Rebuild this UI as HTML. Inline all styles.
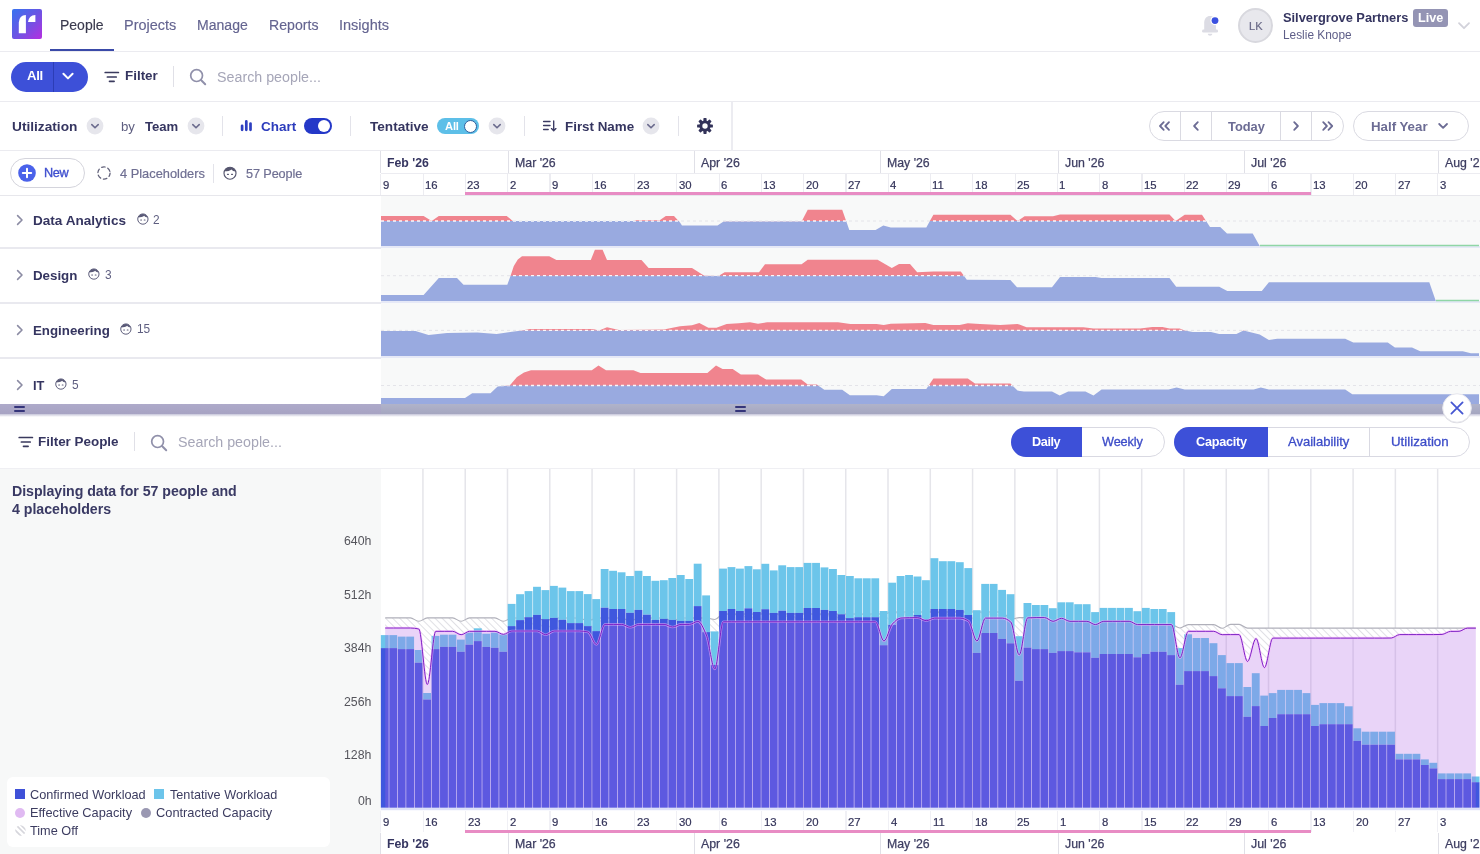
<!DOCTYPE html>
<html><head><meta charset="utf-8"><title>People</title>
<style>
html,body{margin:0;padding:0;background:#fff}
body{width:1480px;height:854px;position:relative;overflow:hidden;font-family:"Liberation Sans",sans-serif}
.t{position:absolute;white-space:nowrap;line-height:20px;height:20px;will-change:transform}
#root{position:absolute;left:0;top:0;width:1480px;height:854px;overflow:hidden;background:#fff}
</style></head><body><div id="root">
<div style="position:absolute;left:0px;top:51px;width:1480px;height:1px;background:#ebebf0"></div>
<div style="position:absolute;left:50px;top:49px;width:64px;height:2px;background:#3a4aa8"></div>
<svg style="position:absolute;left:12px;top:9px" width="30" height="30" viewBox="0 0 30 30">
<defs><linearGradient id="lg" x1="0" y1="0" x2="1" y2="1"><stop offset="0" stop-color="#3773f0"/><stop offset="0.5" stop-color="#6a55e4"/><stop offset="1" stop-color="#b52fe0"/></linearGradient></defs>
<rect width="30" height="30" rx="2" fill="url(#lg)"/>
<path d="M6.8 24.2V13.4Q7.2 6.2 13.9 5.9V24.2Z" fill="#fff"/><path d="M16 13.1Q16.6 6.3 23.4 5.9V13.1Z" fill="#fff"/></svg>
<div class="t" style="left:60.4px;top:15.3px;font-size:14.00px;letter-spacing:0.000px;font-weight:400;color:#3a3a4e;-webkit-text-stroke:0.15px #3a3a4e;">People</div>
<div class="t" style="left:124.3px;top:15.3px;font-size:14.45px;letter-spacing:0.000px;font-weight:400;color:#646490;-webkit-text-stroke:0.15px #646490;">Projects</div>
<div class="t" style="left:197.3px;top:15.3px;font-size:14.06px;letter-spacing:0.000px;font-weight:400;color:#646490;-webkit-text-stroke:0.15px #646490;">Manage</div>
<div class="t" style="left:268.9px;top:15.3px;font-size:14.14px;letter-spacing:0.000px;font-weight:400;color:#646490;-webkit-text-stroke:0.15px #646490;">Reports</div>
<div class="t" style="left:339.2px;top:15.3px;font-size:14.51px;letter-spacing:0.000px;font-weight:400;color:#646490;-webkit-text-stroke:0.15px #646490;">Insights</div>
<svg style="position:absolute;left:1200px;top:14px" width="22" height="24" viewBox="0 0 22 24">
<path d="M4.2 16V8.6C4.2 4.7 6.7 2 10.05 2S15.9 4.7 15.9 8.6V16Z" fill="#dcdce4"/><rect x="2.1" y="15.6" width="15.9" height="3" rx="1.3" fill="#dcdce4"/>
<path d="M7.8 19.7h4.5c0 1.2-1 2-2.25 2s-2.25-.8-2.25-2z" fill="#dcdce4"/>
<circle cx="15" cy="6.6" r="4.6" fill="#fff"/><circle cx="15" cy="6.6" r="3.4" fill="#3a50e0"/></svg>
<div style="position:absolute;left:1238px;top:8px;width:31px;height:31px;border-radius:50%;background:#e8e8ed;border:2px solid #d8d8de"></div>
<div class="t" style="left:1248.7px;top:15.6px;font-size:11.04px;letter-spacing:0.000px;font-weight:400;color:#6a6a88;-webkit-text-stroke:0.2px #6a6a88;">LK</div>
<div class="t" style="left:1283.2px;top:7.6px;font-size:12.82px;letter-spacing:0.000px;font-weight:700;color:#353560;">Silvergrove Partners</div>
<div style="position:absolute;left:1413px;top:9px;width:35px;height:18px;border-radius:3px;background:#9494b4"></div>
<div class="t" style="left:1418.0px;top:8.2px;font-size:12.64px;letter-spacing:0.000px;font-weight:700;color:#fff;">Live</div>
<div class="t" style="left:1283.2px;top:24.8px;font-size:11.86px;letter-spacing:0.000px;font-weight:400;color:#5e5e88;">Leslie Knope</div>
<svg style="position:absolute;left:1457px;top:21px" width="14" height="10" viewBox="0 0 14 10"><path d="M2 2.2l5 5 5-5" fill="none" stroke="#d2d2da" stroke-width="1.8" stroke-linecap="round" stroke-linejoin="round"/></svg>
<div style="position:absolute;left:0px;top:101px;width:1480px;height:1px;background:#ebebf0"></div>
<div style="position:absolute;left:10.5px;top:61.5px;width:77.5px;height:30px;border-radius:15px;background:#3d50d8"></div>
<div style="position:absolute;left:53px;top:61.5px;width:1px;height:30px;background:#2c3db6"></div>
<div class="t" style="left:26.8px;top:66.3px;font-size:13.20px;letter-spacing:-0.389px;font-weight:700;color:#fff;">All</div>
<svg style="position:absolute;left:61px;top:70px" width="14" height="12" viewBox="0 0 14 12"><path d="M2.4 3.8l4.6 4.6 4.6-4.6" fill="none" stroke="#fff" stroke-width="2" stroke-linecap="round" stroke-linejoin="round"/></svg>
<svg style="position:absolute;left:104px;top:70.5px" width="16" height="12" viewBox="0 0 16 12"><path d="M1.2 1.5h13.2M3.4 6h8.8M5.5 10.3h4.6" fill="none" stroke="#3a3a5e" stroke-width="1.7" stroke-linecap="round"/></svg>
<div class="t" style="left:124.5px;top:66.3px;font-size:13.42px;letter-spacing:0.000px;font-weight:700;color:#353560;">Filter</div>
<div style="position:absolute;left:172.6px;top:66px;width:1px;height:21px;background:#e0e0e7"></div>
<svg style="position:absolute;left:188.6px;top:68px" width="18" height="18" viewBox="0 0 18 18"><circle cx="7.6" cy="7.6" r="5.9" fill="none" stroke="#9090aa" stroke-width="1.7"/><path d="M12 12l4.2 4.2" stroke="#9090aa" stroke-width="2" stroke-linecap="round"/></svg>
<div class="t" style="left:217.0px;top:66.8px;font-size:14.28px;letter-spacing:0.000px;font-weight:400;color:#a6a6b8;">Search people...</div>
<div style="position:absolute;left:0px;top:150px;width:1480px;height:1px;background:#ebebf0"></div>
<div style="position:absolute;left:731px;top:102px;width:1.5px;height:49px;background:#ececf1"></div>
<div class="t" style="left:12.4px;top:117.0px;font-size:13.69px;letter-spacing:0.000px;font-weight:700;color:#353560;">Utilization</div>
<svg style="position:absolute;left:85.5px;top:117px" width="18" height="18" viewBox="0 0 18 18"><circle cx="9" cy="9" r="8.4" fill="#e6e6ec"/><path d="M5.8 7.6L9 10.8l3.2-3.2" fill="none" stroke="#6c6c8e" stroke-width="1.6" stroke-linecap="round" stroke-linejoin="round"/></svg>
<div class="t" style="left:121.4px;top:117.2px;font-size:13.20px;letter-spacing:-0.121px;font-weight:400;color:#5e5e80;">by</div>
<div class="t" style="left:145.1px;top:117.0px;font-size:13.12px;letter-spacing:0.000px;font-weight:700;color:#353560;">Team</div>
<svg style="position:absolute;left:186.5px;top:117px" width="18" height="18" viewBox="0 0 18 18"><circle cx="9" cy="9" r="8.4" fill="#e6e6ec"/><path d="M5.8 7.6L9 10.8l3.2-3.2" fill="none" stroke="#6c6c8e" stroke-width="1.6" stroke-linecap="round" stroke-linejoin="round"/></svg>
<div style="position:absolute;left:222.3px;top:116px;width:1px;height:20px;background:#e3e3ea"></div>
<svg style="position:absolute;left:240px;top:119px" width="13" height="13" viewBox="0 0 13 13"><path d="M2.1 6.8v4M6.3 2.4v8.4M10.5 4.5v6.3" stroke="#2d3fc0" stroke-width="2.7" stroke-linecap="round"/></svg>
<div class="t" style="left:260.5px;top:117.0px;font-size:13.48px;letter-spacing:0.000px;font-weight:700;color:#2c3cbc;">Chart</div>
<div style="position:absolute;left:304px;top:118px;width:28px;height:16px;border-radius:8px;background:#2438c8"></div>
<div style="position:absolute;left:317.7px;top:119.7px;width:12.6px;height:12.6px;border-radius:50%;background:#fff"></div>
<div style="position:absolute;left:350.3px;top:116px;width:1px;height:20px;background:#e3e3ea"></div>
<div class="t" style="left:370.0px;top:117.0px;font-size:13.58px;letter-spacing:0.000px;font-weight:700;color:#353560;">Tentative</div>
<div style="position:absolute;left:437px;top:118px;width:41.5px;height:16px;border-radius:8px;background:#5dbfe8"></div>
<div class="t" style="left:445.2px;top:115.8px;font-size:11.20px;letter-spacing:-0.171px;font-weight:700;color:#fff;">All</div>
<div style="position:absolute;left:464.2px;top:119.8px;width:11px;height:11px;border-radius:50%;background:#fff;border:1.2px solid #2f5f9e"></div>
<svg style="position:absolute;left:488px;top:117px" width="18" height="18" viewBox="0 0 18 18"><circle cx="9" cy="9" r="8.4" fill="#e6e6ec"/><path d="M5.8 7.6L9 10.8l3.2-3.2" fill="none" stroke="#6c6c8e" stroke-width="1.6" stroke-linecap="round" stroke-linejoin="round"/></svg>
<div style="position:absolute;left:523.6px;top:116px;width:1px;height:20px;background:#e3e3ea"></div>
<svg style="position:absolute;left:541px;top:118px" width="17" height="16" viewBox="0 0 17 16"><path d="M2.6 3.5h6.4M2.6 7.5h6.4M2.6 11.5h4.6" stroke="#3a3a62" stroke-width="1.4" stroke-linecap="round"/><path d="M12.7 3v9.6M10.5 10.6l2.2 2.2 2.2-2.2" fill="none" stroke="#3a3a62" stroke-width="1.35" stroke-linecap="round" stroke-linejoin="round"/></svg>
<div class="t" style="left:564.8px;top:117.0px;font-size:13.39px;letter-spacing:0.000px;font-weight:700;color:#353560;">First Name</div>
<svg style="position:absolute;left:642px;top:117px" width="18" height="18" viewBox="0 0 18 18"><circle cx="9" cy="9" r="8.4" fill="#e6e6ec"/><path d="M5.8 7.6L9 10.8l3.2-3.2" fill="none" stroke="#6c6c8e" stroke-width="1.6" stroke-linecap="round" stroke-linejoin="round"/></svg>
<div style="position:absolute;left:677.9px;top:116px;width:1px;height:20px;background:#e3e3ea"></div>
<svg style="position:absolute;left:695.5px;top:117px" width="18" height="18" viewBox="-9 -9 18 18"><g fill="#33335a"><rect x="-1.6" y="-7.9" width="3.2" height="4" rx="0.7" transform="rotate(0)"/><rect x="-1.6" y="-7.9" width="3.2" height="4" rx="0.7" transform="rotate(45)"/><rect x="-1.6" y="-7.9" width="3.2" height="4" rx="0.7" transform="rotate(90)"/><rect x="-1.6" y="-7.9" width="3.2" height="4" rx="0.7" transform="rotate(135)"/><rect x="-1.6" y="-7.9" width="3.2" height="4" rx="0.7" transform="rotate(180)"/><rect x="-1.6" y="-7.9" width="3.2" height="4" rx="0.7" transform="rotate(225)"/><rect x="-1.6" y="-7.9" width="3.2" height="4" rx="0.7" transform="rotate(270)"/><rect x="-1.6" y="-7.9" width="3.2" height="4" rx="0.7" transform="rotate(315)"/><circle r="5.6"/></g><circle r="2.7" fill="#fff"/></svg>
<div style="position:absolute;left:1149px;top:111px;width:192.5px;height:28px;border-radius:15px;border:1px solid #dadae2;background:#fff"></div>
<div style="position:absolute;left:1179.9px;top:112px;width:1px;height:28px;background:#dadae2"></div>
<div style="position:absolute;left:1211.0px;top:112px;width:1px;height:28px;background:#dadae2"></div>
<div style="position:absolute;left:1279.9px;top:112px;width:1px;height:28px;background:#dadae2"></div>
<div style="position:absolute;left:1310.9px;top:112px;width:1px;height:28px;background:#dadae2"></div>
<svg style="position:absolute;left:1155px;top:119px" width="20" height="14" viewBox="0 0 20 14"><path d="M8.7 3.2L5 7l3.7 3.8M14 3.2L10.3 7l3.7 3.8" fill="none" stroke="#6c6c94" stroke-width="1.8" stroke-linecap="round" stroke-linejoin="round"/></svg>
<svg style="position:absolute;left:1186px;top:119px" width="20" height="14" viewBox="0 0 20 14"><path d="M11.8 3.2L8.1 7l3.7 3.8" fill="none" stroke="#6c6c94" stroke-width="1.8" stroke-linecap="round" stroke-linejoin="round"/></svg>
<div class="t" style="left:1227.6px;top:117.0px;font-size:12.85px;letter-spacing:0.000px;font-weight:700;color:#6c6c94;">Today</div>
<svg style="position:absolute;left:1286px;top:119px" width="20" height="14" viewBox="0 0 20 14"><path d="M8.2 3.2l3.7 3.8-3.7 3.8" fill="none" stroke="#6c6c94" stroke-width="1.8" stroke-linecap="round" stroke-linejoin="round"/></svg>
<svg style="position:absolute;left:1317px;top:119px" width="20" height="14" viewBox="0 0 20 14"><path d="M6.2 3.2L9.9 7l-3.7 3.8M11.5 3.2l3.7 3.8-3.7 3.8" fill="none" stroke="#6c6c94" stroke-width="1.8" stroke-linecap="round" stroke-linejoin="round"/></svg>
<div style="position:absolute;left:1353px;top:111px;width:113.5px;height:28px;border-radius:15px;border:1px solid #dadae2;background:#fff"></div>
<div class="t" style="left:1371.4px;top:117.0px;font-size:13.28px;letter-spacing:0.000px;font-weight:700;color:#6c6c94;">Half Year</div>
<svg style="position:absolute;left:1432.5px;top:119px" width="20" height="14" viewBox="0 0 20 14"><path d="M6.2 5l3.9 3.9L14 5" fill="none" stroke="#6c6c94" stroke-width="1.8" stroke-linecap="round" stroke-linejoin="round"/></svg>
<div style="position:absolute;left:0px;top:195px;width:1480px;height:1px;background:#e7e7ec"></div>
<div style="position:absolute;left:10px;top:158px;width:72.5px;height:28px;border-radius:15px;border:1px solid #d4d4dc;background:#fff"></div>
<svg style="position:absolute;left:18px;top:164px" width="18" height="18" viewBox="0 0 18 18"><circle cx="9" cy="9" r="8.8" fill="#4a62ea"/><path d="M9 4.8v8.4M4.8 9h8.4" stroke="#fff" stroke-width="2" stroke-linecap="round"/></svg>
<div class="t" style="left:43.6px;top:163.0px;font-size:12.70px;letter-spacing:-0.335px;font-weight:400;color:#3f4fcf;-webkit-text-stroke:0.35px #3f4fcf;">New</div>
<svg style="position:absolute;left:96px;top:165px" width="16" height="16" viewBox="0 0 16 16"><circle cx="8" cy="8" r="6.1" fill="none" stroke="#5f5f78" stroke-width="1.25" stroke-dasharray="3.6 2.8" stroke-linecap="round"/></svg>
<div class="t" style="left:120.0px;top:164.0px;font-size:12.83px;letter-spacing:0.000px;font-weight:400;color:#6f6f92;-webkit-text-stroke:0.2px #6f6f92;">4 Placeholders</div>
<div style="position:absolute;left:213.4px;top:163.5px;width:1px;height:19px;background:#e3e3ea"></div>
<svg style="position:absolute;left:221.8px;top:164.8px" width="16.0" height="16.0" viewBox="0 0 16 16"><circle cx="8" cy="8.2" r="6" fill="none" stroke="#55556e" stroke-width="1.15"/><path d="M2.6 6.3C3.4 3.7 5.4 2.2 8 2.2c2.7 0 4.8 1.6 5.5 4.3C11.8 6.3 10.4 5.6 9.5 4.4 8.2 5.6 5.4 6.3 2.6 6.3z" fill="#55556e"/><path d="M5.5 9.3h0.9M9.6 9.3h0.9" stroke="#55556e" stroke-width="1.3" stroke-linecap="round"/></svg>
<div class="t" style="left:246.1px;top:164.0px;font-size:12.70px;letter-spacing:-0.111px;font-weight:400;color:#6f6f92;-webkit-text-stroke:0.2px #6f6f92;">57 People</div>
<div style="position:absolute;left:381px;top:151px;width:1099px;height:44px;background:#fff"></div>
<div style="position:absolute;left:381px;top:172.6px;width:1099px;height:1px;background:#ececf1"></div>
<div style="position:absolute;left:380px;top:151px;width:1px;height:22px;background:#e0e0e7"></div>
<div class="t" style="left:387.3px;top:152.5px;font-size:12.31px;letter-spacing:0.000px;font-weight:700;color:#353560;">Feb '26</div>
<div style="position:absolute;left:508px;top:151px;width:1px;height:22px;background:#e0e0e7"></div>
<div class="t" style="left:515.2px;top:152.5px;font-size:12.33px;letter-spacing:0.000px;font-weight:400;color:#3e3e62;-webkit-text-stroke:0.25px #3e3e62;">Mar '26</div>
<div style="position:absolute;left:694px;top:151px;width:1px;height:22px;background:#e0e0e7"></div>
<div class="t" style="left:701.4px;top:152.5px;font-size:12.36px;letter-spacing:0.000px;font-weight:400;color:#3e3e62;-webkit-text-stroke:0.25px #3e3e62;">Apr '26</div>
<div style="position:absolute;left:880px;top:151px;width:1px;height:22px;background:#e0e0e7"></div>
<div class="t" style="left:887.3px;top:152.5px;font-size:12.30px;letter-spacing:0.000px;font-weight:400;color:#3e3e62;-webkit-text-stroke:0.25px #3e3e62;">May '26</div>
<div style="position:absolute;left:1058px;top:151px;width:1px;height:22px;background:#e0e0e7"></div>
<div class="t" style="left:1064.8px;top:152.5px;font-size:12.35px;letter-spacing:0.000px;font-weight:400;color:#3e3e62;-webkit-text-stroke:0.25px #3e3e62;">Jun '26</div>
<div style="position:absolute;left:1244px;top:151px;width:1px;height:22px;background:#e0e0e7"></div>
<div class="t" style="left:1250.8px;top:152.5px;font-size:12.41px;letter-spacing:0.000px;font-weight:400;color:#3e3e62;-webkit-text-stroke:0.25px #3e3e62;">Jul '26</div>
<div style="position:absolute;left:1438px;top:151px;width:1px;height:22px;background:#e0e0e7"></div>
<div class="t" style="left:1445.3px;top:152.5px;font-size:12.32px;letter-spacing:0.000px;font-weight:400;color:#3e3e62;-webkit-text-stroke:0.25px #3e3e62;">Aug '26</div>
<div style="position:absolute;left:380.3px;top:173.5px;width:1.2px;height:21px;background:#ececf1"></div>
<div class="t" style="left:382.8px;top:175.1px;font-size:11.35px;letter-spacing:0.000px;font-weight:400;color:#34345a;-webkit-text-stroke:0.2px #34345a;">9</div>
<div style="position:absolute;left:422.58px;top:173.5px;width:1.2px;height:21px;background:#ececf1"></div>
<div class="t" style="left:425.1px;top:175.1px;font-size:11.35px;letter-spacing:-0.000px;font-weight:400;color:#34345a;-webkit-text-stroke:0.2px #34345a;">16</div>
<div style="position:absolute;left:464.86px;top:173.5px;width:1.2px;height:21px;background:#ececf1"></div>
<div class="t" style="left:467.4px;top:175.1px;font-size:11.35px;letter-spacing:-0.000px;font-weight:400;color:#34345a;-webkit-text-stroke:0.2px #34345a;">23</div>
<div style="position:absolute;left:507.14000000000004px;top:173.5px;width:1.2px;height:21px;background:#ececf1"></div>
<div class="t" style="left:509.6px;top:175.1px;font-size:11.35px;letter-spacing:0.000px;font-weight:400;color:#34345a;-webkit-text-stroke:0.2px #34345a;">2</div>
<div style="position:absolute;left:549.42px;top:173.5px;width:1.2px;height:21px;background:#ececf1"></div>
<div class="t" style="left:551.9px;top:175.1px;font-size:11.35px;letter-spacing:0.000px;font-weight:400;color:#34345a;-webkit-text-stroke:0.2px #34345a;">9</div>
<div style="position:absolute;left:591.6999999999999px;top:173.5px;width:1.2px;height:21px;background:#ececf1"></div>
<div class="t" style="left:594.2px;top:175.1px;font-size:11.35px;letter-spacing:0.000px;font-weight:400;color:#34345a;-webkit-text-stroke:0.2px #34345a;">16</div>
<div style="position:absolute;left:633.98px;top:173.5px;width:1.2px;height:21px;background:#ececf1"></div>
<div class="t" style="left:636.5px;top:175.1px;font-size:11.35px;letter-spacing:0.000px;font-weight:400;color:#34345a;-webkit-text-stroke:0.2px #34345a;">23</div>
<div style="position:absolute;left:676.26px;top:173.5px;width:1.2px;height:21px;background:#ececf1"></div>
<div class="t" style="left:678.8px;top:175.1px;font-size:11.35px;letter-spacing:0.000px;font-weight:400;color:#34345a;-webkit-text-stroke:0.2px #34345a;">30</div>
<div style="position:absolute;left:718.54px;top:173.5px;width:1.2px;height:21px;background:#ececf1"></div>
<div class="t" style="left:721.0px;top:175.1px;font-size:11.35px;letter-spacing:0.000px;font-weight:400;color:#34345a;-webkit-text-stroke:0.2px #34345a;">6</div>
<div style="position:absolute;left:760.8199999999999px;top:173.5px;width:1.2px;height:21px;background:#ececf1"></div>
<div class="t" style="left:763.3px;top:175.1px;font-size:11.35px;letter-spacing:0.000px;font-weight:400;color:#34345a;-webkit-text-stroke:0.2px #34345a;">13</div>
<div style="position:absolute;left:803.0999999999999px;top:173.5px;width:1.2px;height:21px;background:#ececf1"></div>
<div class="t" style="left:805.6px;top:175.1px;font-size:11.35px;letter-spacing:0.000px;font-weight:400;color:#34345a;-webkit-text-stroke:0.2px #34345a;">20</div>
<div style="position:absolute;left:845.38px;top:173.5px;width:1.2px;height:21px;background:#ececf1"></div>
<div class="t" style="left:847.9px;top:175.1px;font-size:11.35px;letter-spacing:0.000px;font-weight:400;color:#34345a;-webkit-text-stroke:0.2px #34345a;">27</div>
<div style="position:absolute;left:887.66px;top:173.5px;width:1.2px;height:21px;background:#ececf1"></div>
<div class="t" style="left:890.2px;top:175.1px;font-size:11.35px;letter-spacing:0.000px;font-weight:400;color:#34345a;-webkit-text-stroke:0.2px #34345a;">4</div>
<div style="position:absolute;left:929.9399999999999px;top:173.5px;width:1.2px;height:21px;background:#ececf1"></div>
<div class="t" style="left:932.4px;top:175.1px;font-size:11.35px;letter-spacing:0.000px;font-weight:400;color:#34345a;-webkit-text-stroke:0.2px #34345a;">11</div>
<div style="position:absolute;left:972.22px;top:173.5px;width:1.2px;height:21px;background:#ececf1"></div>
<div class="t" style="left:974.7px;top:175.1px;font-size:11.35px;letter-spacing:0.000px;font-weight:400;color:#34345a;-webkit-text-stroke:0.2px #34345a;">18</div>
<div style="position:absolute;left:1014.5px;top:173.5px;width:1.2px;height:21px;background:#ececf1"></div>
<div class="t" style="left:1017.0px;top:175.1px;font-size:11.35px;letter-spacing:0.000px;font-weight:400;color:#34345a;-webkit-text-stroke:0.2px #34345a;">25</div>
<div style="position:absolute;left:1056.78px;top:173.5px;width:1.2px;height:21px;background:#ececf1"></div>
<div class="t" style="left:1059.3px;top:175.1px;font-size:11.35px;letter-spacing:0.000px;font-weight:400;color:#34345a;-webkit-text-stroke:0.2px #34345a;">1</div>
<div style="position:absolute;left:1099.06px;top:173.5px;width:1.2px;height:21px;background:#ececf1"></div>
<div class="t" style="left:1101.6px;top:175.1px;font-size:11.35px;letter-spacing:0.000px;font-weight:400;color:#34345a;-webkit-text-stroke:0.2px #34345a;">8</div>
<div style="position:absolute;left:1141.34px;top:173.5px;width:1.2px;height:21px;background:#ececf1"></div>
<div class="t" style="left:1143.8px;top:175.1px;font-size:11.35px;letter-spacing:0.000px;font-weight:400;color:#34345a;-webkit-text-stroke:0.2px #34345a;">15</div>
<div style="position:absolute;left:1183.6200000000001px;top:173.5px;width:1.2px;height:21px;background:#ececf1"></div>
<div class="t" style="left:1186.1px;top:175.1px;font-size:11.35px;letter-spacing:0.000px;font-weight:400;color:#34345a;-webkit-text-stroke:0.2px #34345a;">22</div>
<div style="position:absolute;left:1225.8999999999999px;top:173.5px;width:1.2px;height:21px;background:#ececf1"></div>
<div class="t" style="left:1228.4px;top:175.1px;font-size:11.35px;letter-spacing:0.000px;font-weight:400;color:#34345a;-webkit-text-stroke:0.2px #34345a;">29</div>
<div style="position:absolute;left:1268.18px;top:173.5px;width:1.2px;height:21px;background:#ececf1"></div>
<div class="t" style="left:1270.7px;top:175.1px;font-size:11.35px;letter-spacing:0.000px;font-weight:400;color:#34345a;-webkit-text-stroke:0.2px #34345a;">6</div>
<div style="position:absolute;left:1310.46px;top:173.5px;width:1.2px;height:21px;background:#ececf1"></div>
<div class="t" style="left:1313.0px;top:175.1px;font-size:11.35px;letter-spacing:0.000px;font-weight:400;color:#34345a;-webkit-text-stroke:0.2px #34345a;">13</div>
<div style="position:absolute;left:1352.74px;top:173.5px;width:1.2px;height:21px;background:#ececf1"></div>
<div class="t" style="left:1355.2px;top:175.1px;font-size:11.35px;letter-spacing:0.000px;font-weight:400;color:#34345a;-webkit-text-stroke:0.2px #34345a;">20</div>
<div style="position:absolute;left:1395.02px;top:173.5px;width:1.2px;height:21px;background:#ececf1"></div>
<div class="t" style="left:1397.5px;top:175.1px;font-size:11.35px;letter-spacing:0.000px;font-weight:400;color:#34345a;-webkit-text-stroke:0.2px #34345a;">27</div>
<div style="position:absolute;left:1437.3px;top:173.5px;width:1.2px;height:21px;background:#ececf1"></div>
<div class="t" style="left:1439.8px;top:175.1px;font-size:11.35px;letter-spacing:0.000px;font-weight:400;color:#34345a;-webkit-text-stroke:0.2px #34345a;">3</div>
<div style="position:absolute;left:465.16px;top:192px;width:845.8000000000002px;height:3px;background:#e88cc4"></div>
<div style="position:absolute;left:381px;top:196px;width:1099px;height:208px;background:#f8f9f9"></div>
<svg style="position:absolute;left:14px;top:213.4px" width="12" height="14" viewBox="0 0 12 14"><path d="M3.6 2.6L8 7l-4.4 4.4" fill="none" stroke="#8c8ca4" stroke-width="1.6" stroke-linecap="round" stroke-linejoin="round"/></svg>
<div class="t" style="left:33.2px;top:210.9px;font-size:13.57px;letter-spacing:0.000px;font-weight:700;color:#353560;">Data Analytics</div>
<svg style="position:absolute;left:135.62px;top:212.448px" width="13.76" height="13.76" viewBox="0 0 16 16"><circle cx="8" cy="8.2" r="6" fill="none" stroke="#5a5a78" stroke-width="1.15"/><path d="M2.6 6.3C3.4 3.7 5.4 2.2 8 2.2c2.7 0 4.8 1.6 5.5 4.3C11.8 6.3 10.4 5.6 9.5 4.4 8.2 5.6 5.4 6.3 2.6 6.3z" fill="#5a5a78"/><path d="M5.5 9.3h0.9M9.6 9.3h0.9" stroke="#5a5a78" stroke-width="1.3" stroke-linecap="round"/></svg>
<div class="t" style="left:153.2px;top:209.8px;font-size:11.87px;letter-spacing:0.000px;font-weight:400;color:#5e5e80;">2</div>
<svg style="position:absolute;left:14px;top:268.2px" width="12" height="14" viewBox="0 0 12 14"><path d="M3.6 2.6L8 7l-4.4 4.4" fill="none" stroke="#8c8ca4" stroke-width="1.6" stroke-linecap="round" stroke-linejoin="round"/></svg>
<div class="t" style="left:33.2px;top:265.7px;font-size:13.32px;letter-spacing:0.000px;font-weight:700;color:#353560;">Design</div>
<svg style="position:absolute;left:87.02px;top:267.248px" width="13.76" height="13.76" viewBox="0 0 16 16"><circle cx="8" cy="8.2" r="6" fill="none" stroke="#5a5a78" stroke-width="1.15"/><path d="M2.6 6.3C3.4 3.7 5.4 2.2 8 2.2c2.7 0 4.8 1.6 5.5 4.3C11.8 6.3 10.4 5.6 9.5 4.4 8.2 5.6 5.4 6.3 2.6 6.3z" fill="#5a5a78"/><path d="M5.5 9.3h0.9M9.6 9.3h0.9" stroke="#5a5a78" stroke-width="1.3" stroke-linecap="round"/></svg>
<div class="t" style="left:104.6px;top:264.6px;font-size:11.88px;letter-spacing:0.000px;font-weight:400;color:#5e5e80;">3</div>
<svg style="position:absolute;left:14px;top:323.0px" width="12" height="14" viewBox="0 0 12 14"><path d="M3.6 2.6L8 7l-4.4 4.4" fill="none" stroke="#8c8ca4" stroke-width="1.6" stroke-linecap="round" stroke-linejoin="round"/></svg>
<div class="t" style="left:33.2px;top:320.5px;font-size:13.29px;letter-spacing:0.000px;font-weight:700;color:#353560;">Engineering</div>
<svg style="position:absolute;left:119.42px;top:322.048px" width="13.76" height="13.76" viewBox="0 0 16 16"><circle cx="8" cy="8.2" r="6" fill="none" stroke="#5a5a78" stroke-width="1.15"/><path d="M2.6 6.3C3.4 3.7 5.4 2.2 8 2.2c2.7 0 4.8 1.6 5.5 4.3C11.8 6.3 10.4 5.6 9.5 4.4 8.2 5.6 5.4 6.3 2.6 6.3z" fill="#5a5a78"/><path d="M5.5 9.3h0.9M9.6 9.3h0.9" stroke="#5a5a78" stroke-width="1.3" stroke-linecap="round"/></svg>
<div class="t" style="left:137.0px;top:319.4px;font-size:11.88px;letter-spacing:0.000px;font-weight:400;color:#5e5e80;">15</div>
<svg style="position:absolute;left:14px;top:378.4px" width="12" height="14" viewBox="0 0 12 14"><path d="M3.6 2.6L8 7l-4.4 4.4" fill="none" stroke="#8c8ca4" stroke-width="1.6" stroke-linecap="round" stroke-linejoin="round"/></svg>
<div class="t" style="left:33.2px;top:375.9px;font-size:12.83px;letter-spacing:0.000px;font-weight:700;color:#353560;">IT</div>
<svg style="position:absolute;left:54.02px;top:377.448px" width="13.76" height="13.76" viewBox="0 0 16 16"><circle cx="8" cy="8.2" r="6" fill="none" stroke="#5a5a78" stroke-width="1.15"/><path d="M2.6 6.3C3.4 3.7 5.4 2.2 8 2.2c2.7 0 4.8 1.6 5.5 4.3C11.8 6.3 10.4 5.6 9.5 4.4 8.2 5.6 5.4 6.3 2.6 6.3z" fill="#5a5a78"/><path d="M5.5 9.3h0.9M9.6 9.3h0.9" stroke="#5a5a78" stroke-width="1.3" stroke-linecap="round"/></svg>
<div class="t" style="left:71.6px;top:374.8px;font-size:11.88px;letter-spacing:0.000px;font-weight:400;color:#5e5e80;">5</div>
<div style="position:absolute;left:0px;top:247px;width:381px;height:1.6px;background:#e9e9ef"></div>
<div style="position:absolute;left:381px;top:246.4px;width:1099px;height:2px;background:#e6e9f7"></div>
<div style="position:absolute;left:0px;top:302px;width:381px;height:1.6px;background:#e9e9ef"></div>
<div style="position:absolute;left:381px;top:301.4px;width:1099px;height:2px;background:#e6e9f7"></div>
<div style="position:absolute;left:0px;top:357px;width:381px;height:1.6px;background:#e9e9ef"></div>
<div style="position:absolute;left:381px;top:356.4px;width:1099px;height:2px;background:#e6e9f7"></div>
<svg style="position:absolute;left:0;top:0" width="1480" height="404" viewBox="0 0 1480 404"><defs><clipPath id="cb0"><rect x="381" y="221" width="1099" height="80"/></clipPath><clipPath id="cr0"><rect x="381" y="161" width="1099" height="60.4"/></clipPath><clipPath id="cb1"><rect x="381" y="275.7" width="1099" height="80"/></clipPath><clipPath id="cr1"><rect x="381" y="215.7" width="1099" height="60.4"/></clipPath><clipPath id="cb2"><rect x="381" y="330.4" width="1099" height="80"/></clipPath><clipPath id="cr2"><rect x="381" y="270.4" width="1099" height="60.4"/></clipPath><clipPath id="cb3"><rect x="381" y="385.5" width="1099" height="80"/></clipPath><clipPath id="cr3"><rect x="381" y="325.5" width="1099" height="60.4"/></clipPath></defs><path d="M381 221H1480" stroke="#e4e4e9" stroke-width="1" stroke-dasharray="3 3" fill="none"/><path d="M381.0 216.0 L423.6 216.0 L431.7 221.0 L438.8 216.0 L506.7 216.0 L512.8 221.0 L634.4 221.0 L636.0 220.3 L659.7 220.3 L665.8 216.0 L674.0 216.0 L680.0 222.5 L682.0 225.4 L717.5 225.4 L723.6 221.6 L801.6 221.6 L807.7 209.8 L842.2 209.8 L849.3 229.9 L875.6 229.9 L883.3 225.4 L890.8 227.4 L926.3 227.4 L933.4 214.7 L1010.4 214.7 L1017.5 221.0 L1024.6 216.3 L1053.0 216.3 L1060.0 214.5 L1169.5 214.5 L1175.6 221.0 L1184.7 214.7 L1202.0 214.7 L1210.0 227.0 L1220.2 227.0 L1227.0 233.5 L1252.7 233.5 L1259.7 246.0 L1259.7 246 L381 246 Z" fill="#f0848e" clip-path="url(#cr0)"/><path d="M381.0 216.0 L423.6 216.0 L431.7 221.0 L438.8 216.0 L506.7 216.0 L512.8 221.0 L634.4 221.0 L636.0 220.3 L659.7 220.3 L665.8 216.0 L674.0 216.0 L680.0 222.5 L682.0 225.4 L717.5 225.4 L723.6 221.6 L801.6 221.6 L807.7 209.8 L842.2 209.8 L849.3 229.9 L875.6 229.9 L883.3 225.4 L890.8 227.4 L926.3 227.4 L933.4 214.7 L1010.4 214.7 L1017.5 221.0 L1024.6 216.3 L1053.0 216.3 L1060.0 214.5 L1169.5 214.5 L1175.6 221.0 L1184.7 214.7 L1202.0 214.7 L1210.0 227.0 L1220.2 227.0 L1227.0 233.5 L1252.7 233.5 L1259.7 246.0 L1259.7 246 L381 246 Z" fill="#99aae0" clip-path="url(#cb0)"/><clipPath id="cs0"><path d="M381.0 216.0 L423.6 216.0 L431.7 221.0 L438.8 216.0 L506.7 216.0 L512.8 221.0 L634.4 221.0 L636.0 220.3 L659.7 220.3 L665.8 216.0 L674.0 216.0 L680.0 222.5 L682.0 225.4 L717.5 225.4 L723.6 221.6 L801.6 221.6 L807.7 209.8 L842.2 209.8 L849.3 229.9 L875.6 229.9 L883.3 225.4 L890.8 227.4 L926.3 227.4 L933.4 214.7 L1010.4 214.7 L1017.5 221.0 L1024.6 216.3 L1053.0 216.3 L1060.0 214.5 L1169.5 214.5 L1175.6 221.0 L1184.7 214.7 L1202.0 214.7 L1210.0 227.0 L1220.2 227.0 L1227.0 233.5 L1252.7 233.5 L1259.7 246.0 L1259.7 246 L381 246 Z"/></clipPath><path d="M381 221H1480" stroke="#fff" stroke-opacity="0.92" stroke-width="1.3" stroke-dasharray="3 3" fill="none" clip-path="url(#cs0)"/><path d="M1260 245.5H1479" stroke="#8fd6a6" stroke-width="1.4" fill="none"/><path d="M381 275.7H1480" stroke="#e4e4e9" stroke-width="1" stroke-dasharray="3 3" fill="none"/><path d="M381.0 295.0 L423.6 295.0 L438.8 278.0 L457.0 278.0 L463.5 284.8 L507.3 284.8 L510.5 276.0 L513.8 266.0 L517.8 259.5 L522.0 256.2 L549.3 256.2 L556.4 259.9 L590.8 259.9 L594.9 249.7 L602.6 249.7 L607.0 259.9 L641.5 259.9 L648.6 268.0 L692.0 268.0 L704.3 275.7 L718.5 276.0 L724.6 272.2 L759.0 272.2 L765.0 264.3 L801.6 264.3 L807.7 259.7 L877.6 259.7 L891.8 268.0 L899.0 264.0 L910.0 264.0 L917.2 272.2 L933.4 271.4 L960.8 271.4 L966.8 279.7 L1010.4 280.1 L1017.0 287.2 L1052.0 287.2 L1060.0 277.1 L1095.5 277.1 L1101.6 278.1 L1169.5 278.1 L1176.2 286.8 L1219.2 286.8 L1227.3 290.9 L1261.8 290.9 L1268.9 282.2 L1429.3 282.2 L1435.8 301.0 L1435.8 301 L381 301 Z" fill="#f0848e" clip-path="url(#cr1)"/><path d="M381.0 295.0 L423.6 295.0 L438.8 278.0 L457.0 278.0 L463.5 284.8 L507.3 284.8 L510.5 276.0 L513.8 266.0 L517.8 259.5 L522.0 256.2 L549.3 256.2 L556.4 259.9 L590.8 259.9 L594.9 249.7 L602.6 249.7 L607.0 259.9 L641.5 259.9 L648.6 268.0 L692.0 268.0 L704.3 275.7 L718.5 276.0 L724.6 272.2 L759.0 272.2 L765.0 264.3 L801.6 264.3 L807.7 259.7 L877.6 259.7 L891.8 268.0 L899.0 264.0 L910.0 264.0 L917.2 272.2 L933.4 271.4 L960.8 271.4 L966.8 279.7 L1010.4 280.1 L1017.0 287.2 L1052.0 287.2 L1060.0 277.1 L1095.5 277.1 L1101.6 278.1 L1169.5 278.1 L1176.2 286.8 L1219.2 286.8 L1227.3 290.9 L1261.8 290.9 L1268.9 282.2 L1429.3 282.2 L1435.8 301.0 L1435.8 301 L381 301 Z" fill="#99aae0" clip-path="url(#cb1)"/><clipPath id="cs1"><path d="M381.0 295.0 L423.6 295.0 L438.8 278.0 L457.0 278.0 L463.5 284.8 L507.3 284.8 L510.5 276.0 L513.8 266.0 L517.8 259.5 L522.0 256.2 L549.3 256.2 L556.4 259.9 L590.8 259.9 L594.9 249.7 L602.6 249.7 L607.0 259.9 L641.5 259.9 L648.6 268.0 L692.0 268.0 L704.3 275.7 L718.5 276.0 L724.6 272.2 L759.0 272.2 L765.0 264.3 L801.6 264.3 L807.7 259.7 L877.6 259.7 L891.8 268.0 L899.0 264.0 L910.0 264.0 L917.2 272.2 L933.4 271.4 L960.8 271.4 L966.8 279.7 L1010.4 280.1 L1017.0 287.2 L1052.0 287.2 L1060.0 277.1 L1095.5 277.1 L1101.6 278.1 L1169.5 278.1 L1176.2 286.8 L1219.2 286.8 L1227.3 290.9 L1261.8 290.9 L1268.9 282.2 L1429.3 282.2 L1435.8 301.0 L1435.8 301 L381 301 Z"/></clipPath><path d="M381 275.7H1480" stroke="#fff" stroke-opacity="0.92" stroke-width="1.3" stroke-dasharray="3 3" fill="none" clip-path="url(#cs1)"/><path d="M1436 300.5H1479" stroke="#8fd6a6" stroke-width="1.4" fill="none"/><path d="M381 330.4H1480" stroke="#e4e4e9" stroke-width="1" stroke-dasharray="3 3" fill="none"/><path d="M381.0 331.0 L415.5 331.0 L428.6 335.0 L447.0 333.0 L477.3 332.4 L496.6 334.0 L522.0 330.4 L530.0 329.0 L592.9 329.0 L599.0 330.4 L607.0 327.3 L619.0 330.0 L663.8 329.5 L680.0 326.3 L692.0 325.3 L699.3 322.9 L708.4 327.7 L716.5 327.7 L726.6 323.9 L738.8 323.3 L750.0 322.3 L758.0 323.7 L767.2 322.3 L838.0 322.3 L850.3 323.9 L876.6 323.9 L883.7 324.9 L890.8 323.7 L925.3 323.0 L933.4 324.9 L959.7 324.9 L967.8 323.3 L980.0 323.9 L1000.3 324.9 L1017.5 323.9 L1026.6 327.3 L1083.4 327.3 L1093.5 328.5 L1140.0 328.5 L1152.3 326.9 L1162.4 326.9 L1169.5 328.5 L1179.7 328.5 L1184.7 330.4 L1192.8 332.0 L1211.0 332.0 L1219.2 334.0 L1236.4 334.0 L1243.5 330.4 L1259.7 334.4 L1268.9 340.0 L1277.3 338.7 L1345.2 338.7 L1353.3 342.5 L1387.8 342.5 L1394.9 347.6 L1412.0 347.6 L1420.2 351.2 L1462.8 351.2 L1470.9 353.3 L1479.0 353.3 L1479.0 356 L381 356 Z" fill="#f0848e" clip-path="url(#cr2)"/><path d="M381.0 331.0 L415.5 331.0 L428.6 335.0 L447.0 333.0 L477.3 332.4 L496.6 334.0 L522.0 330.4 L530.0 329.0 L592.9 329.0 L599.0 330.4 L607.0 327.3 L619.0 330.0 L663.8 329.5 L680.0 326.3 L692.0 325.3 L699.3 322.9 L708.4 327.7 L716.5 327.7 L726.6 323.9 L738.8 323.3 L750.0 322.3 L758.0 323.7 L767.2 322.3 L838.0 322.3 L850.3 323.9 L876.6 323.9 L883.7 324.9 L890.8 323.7 L925.3 323.0 L933.4 324.9 L959.7 324.9 L967.8 323.3 L980.0 323.9 L1000.3 324.9 L1017.5 323.9 L1026.6 327.3 L1083.4 327.3 L1093.5 328.5 L1140.0 328.5 L1152.3 326.9 L1162.4 326.9 L1169.5 328.5 L1179.7 328.5 L1184.7 330.4 L1192.8 332.0 L1211.0 332.0 L1219.2 334.0 L1236.4 334.0 L1243.5 330.4 L1259.7 334.4 L1268.9 340.0 L1277.3 338.7 L1345.2 338.7 L1353.3 342.5 L1387.8 342.5 L1394.9 347.6 L1412.0 347.6 L1420.2 351.2 L1462.8 351.2 L1470.9 353.3 L1479.0 353.3 L1479.0 356 L381 356 Z" fill="#99aae0" clip-path="url(#cb2)"/><clipPath id="cs2"><path d="M381.0 331.0 L415.5 331.0 L428.6 335.0 L447.0 333.0 L477.3 332.4 L496.6 334.0 L522.0 330.4 L530.0 329.0 L592.9 329.0 L599.0 330.4 L607.0 327.3 L619.0 330.0 L663.8 329.5 L680.0 326.3 L692.0 325.3 L699.3 322.9 L708.4 327.7 L716.5 327.7 L726.6 323.9 L738.8 323.3 L750.0 322.3 L758.0 323.7 L767.2 322.3 L838.0 322.3 L850.3 323.9 L876.6 323.9 L883.7 324.9 L890.8 323.7 L925.3 323.0 L933.4 324.9 L959.7 324.9 L967.8 323.3 L980.0 323.9 L1000.3 324.9 L1017.5 323.9 L1026.6 327.3 L1083.4 327.3 L1093.5 328.5 L1140.0 328.5 L1152.3 326.9 L1162.4 326.9 L1169.5 328.5 L1179.7 328.5 L1184.7 330.4 L1192.8 332.0 L1211.0 332.0 L1219.2 334.0 L1236.4 334.0 L1243.5 330.4 L1259.7 334.4 L1268.9 340.0 L1277.3 338.7 L1345.2 338.7 L1353.3 342.5 L1387.8 342.5 L1394.9 347.6 L1412.0 347.6 L1420.2 351.2 L1462.8 351.2 L1470.9 353.3 L1479.0 353.3 L1479.0 356 L381 356 Z"/></clipPath><path d="M381 330.4H1480" stroke="#fff" stroke-opacity="0.92" stroke-width="1.3" stroke-dasharray="3 3" fill="none" clip-path="url(#cs2)"/><path d="M381 385.5H1480" stroke="#e4e4e9" stroke-width="1" stroke-dasharray="3 3" fill="none"/><path d="M381.0 397.9 L465.0 397.9 L472.2 393.2 L490.5 393.2 L497.6 386.5 L509.7 385.5 L517.0 377.0 L524.0 372.5 L531.0 370.3 L591.8 370.3 L598.5 365.4 L606.0 370.3 L633.4 370.3 L640.5 373.0 L707.4 372.9 L716.0 365.4 L722.6 368.9 L732.7 368.9 L740.8 374.4 L758.0 374.4 L766.2 379.6 L801.2 379.6 L807.7 384.5 L816.8 384.5 L824.3 389.8 L842.2 389.8 L849.9 395.2 L876.6 395.2 L883.7 396.2 L891.8 389.0 L926.3 389.0 L933.4 378.4 L967.8 378.4 L975.0 383.5 L1010.4 383.5 L1017.5 390.6 L1024.0 391.4 L1052.0 391.4 L1059.7 395.6 L1068.2 391.4 L1085.4 391.4 L1093.5 395.6 L1101.6 389.4 L1168.5 389.4 L1176.6 387.5 L1184.7 389.4 L1253.7 389.4 L1260.8 387.5 L1268.9 389.4 L1345.2 389.4 L1352.3 394.2 L1479.0 394.2 L1479.0 404 L381 404 Z" fill="#f0848e" clip-path="url(#cr3)"/><path d="M381.0 397.9 L465.0 397.9 L472.2 393.2 L490.5 393.2 L497.6 386.5 L509.7 385.5 L517.0 377.0 L524.0 372.5 L531.0 370.3 L591.8 370.3 L598.5 365.4 L606.0 370.3 L633.4 370.3 L640.5 373.0 L707.4 372.9 L716.0 365.4 L722.6 368.9 L732.7 368.9 L740.8 374.4 L758.0 374.4 L766.2 379.6 L801.2 379.6 L807.7 384.5 L816.8 384.5 L824.3 389.8 L842.2 389.8 L849.9 395.2 L876.6 395.2 L883.7 396.2 L891.8 389.0 L926.3 389.0 L933.4 378.4 L967.8 378.4 L975.0 383.5 L1010.4 383.5 L1017.5 390.6 L1024.0 391.4 L1052.0 391.4 L1059.7 395.6 L1068.2 391.4 L1085.4 391.4 L1093.5 395.6 L1101.6 389.4 L1168.5 389.4 L1176.6 387.5 L1184.7 389.4 L1253.7 389.4 L1260.8 387.5 L1268.9 389.4 L1345.2 389.4 L1352.3 394.2 L1479.0 394.2 L1479.0 404 L381 404 Z" fill="#99aae0" clip-path="url(#cb3)"/><clipPath id="cs3"><path d="M381.0 397.9 L465.0 397.9 L472.2 393.2 L490.5 393.2 L497.6 386.5 L509.7 385.5 L517.0 377.0 L524.0 372.5 L531.0 370.3 L591.8 370.3 L598.5 365.4 L606.0 370.3 L633.4 370.3 L640.5 373.0 L707.4 372.9 L716.0 365.4 L722.6 368.9 L732.7 368.9 L740.8 374.4 L758.0 374.4 L766.2 379.6 L801.2 379.6 L807.7 384.5 L816.8 384.5 L824.3 389.8 L842.2 389.8 L849.9 395.2 L876.6 395.2 L883.7 396.2 L891.8 389.0 L926.3 389.0 L933.4 378.4 L967.8 378.4 L975.0 383.5 L1010.4 383.5 L1017.5 390.6 L1024.0 391.4 L1052.0 391.4 L1059.7 395.6 L1068.2 391.4 L1085.4 391.4 L1093.5 395.6 L1101.6 389.4 L1168.5 389.4 L1176.6 387.5 L1184.7 389.4 L1253.7 389.4 L1260.8 387.5 L1268.9 389.4 L1345.2 389.4 L1352.3 394.2 L1479.0 394.2 L1479.0 404 L381 404 Z"/></clipPath><path d="M381 385.5H1480" stroke="#fff" stroke-opacity="0.92" stroke-width="1.3" stroke-dasharray="3 3" fill="none" clip-path="url(#cs3)"/></svg>
<div style="position:absolute;left:0px;top:403.5px;width:381px;height:10.5px;background:linear-gradient(#aeaaca,#a7a3c3)"></div>
<div style="position:absolute;left:381px;top:403.5px;width:1099px;height:10.5px;background:linear-gradient(#b0b3ca,#a5a6c0)"></div>
<div style="position:absolute;left:0px;top:413.8px;width:1480px;height:3px;background:linear-gradient(rgba(150,148,185,.55),rgba(150,148,185,0))"></div>
<div style="position:absolute;left:14px;top:406.3px;width:11.3px;height:1.9px;background:#35357a;border-radius:1px"></div>
<div style="position:absolute;left:14px;top:409.7px;width:11.3px;height:1.9px;background:#35357a;border-radius:1px"></div>
<div style="position:absolute;left:734.5px;top:406.3px;width:11.3px;height:1.9px;background:#35357a;border-radius:1px"></div>
<div style="position:absolute;left:734.5px;top:409.7px;width:11.3px;height:1.9px;background:#35357a;border-radius:1px"></div>
<svg style="position:absolute;left:1439px;top:390px;overflow:visible" width="36" height="36" viewBox="-2 -2 36 36"><circle cx="16" cy="16.6" r="14.6" fill="#b8b8c4" fill-opacity="0.55"/><circle cx="16" cy="16" r="14.3" fill="#fff" stroke="#e6e6ec" stroke-width="1"/><path d="M10.4 10.4l11.2 11.2M21.6 10.4L10.4 21.6" stroke="#4556d2" stroke-width="1.8" stroke-linecap="round"/></svg>
<div style="position:absolute;left:0px;top:468px;width:1480px;height:1px;background:#efeff3"></div>
<svg style="position:absolute;left:17.6px;top:436px" width="16" height="12" viewBox="0 0 16 12"><path d="M1.2 1.5h13.2M3.4 6h8.8M5.5 10.3h4.6" fill="none" stroke="#3a3a5e" stroke-width="1.7" stroke-linecap="round"/></svg>
<div class="t" style="left:38.4px;top:432.4px;font-size:13.43px;letter-spacing:0.000px;font-weight:700;color:#353560;">Filter People</div>
<div style="position:absolute;left:134px;top:432px;width:1px;height:19px;background:#e0e0e7"></div>
<svg style="position:absolute;left:150px;top:433.6px" width="18" height="18" viewBox="0 0 18 18"><circle cx="7.6" cy="7.6" r="5.9" fill="none" stroke="#9090aa" stroke-width="1.7"/><path d="M12 12l4.2 4.2" stroke="#9090aa" stroke-width="2" stroke-linecap="round"/></svg>
<div class="t" style="left:178.4px;top:432.2px;font-size:14.28px;letter-spacing:0.000px;font-weight:400;color:#a6a6b8;">Search people...</div>
<div style="position:absolute;left:1011px;top:426.5px;width:151.5px;height:28px;border-radius:15px;border:1px solid #d9d9e2;background:#fff"></div>
<div style="position:absolute;left:1011px;top:426.5px;width:71px;height:30px;border-radius:15px 0 0 15px;background:#3d50d8"></div>
<div class="t" style="left:1032.4px;top:431.5px;font-size:12.70px;letter-spacing:-0.411px;font-weight:700;color:#fff;">Daily</div>
<div class="t" style="left:1102.2px;top:431.5px;font-size:12.70px;letter-spacing:-0.101px;font-weight:400;color:#3c4cc8;-webkit-text-stroke:0.3px #3c4cc8;">Weekly</div>
<div style="position:absolute;left:1174px;top:426.5px;width:293.5px;height:28px;border-radius:15px;border:1px solid #d9d9e2;background:#fff"></div>
<div style="position:absolute;left:1174px;top:426.5px;width:93.5px;height:30px;border-radius:15px 0 0 15px;background:#3d50d8"></div>
<div style="position:absolute;left:1369.3px;top:428px;width:1px;height:28px;background:#d9d9e2"></div>
<div class="t" style="left:1195.6px;top:431.5px;font-size:12.70px;letter-spacing:-0.255px;font-weight:700;color:#fff;">Capacity</div>
<div class="t" style="left:1288.0px;top:431.5px;font-size:13.03px;letter-spacing:0.000px;font-weight:400;color:#3c4cc8;-webkit-text-stroke:0.3px #3c4cc8;">Availability</div>
<div class="t" style="left:1390.9px;top:431.5px;font-size:13.31px;letter-spacing:0.000px;font-weight:400;color:#3c4cc8;-webkit-text-stroke:0.3px #3c4cc8;">Utilization</div>
<div style="position:absolute;left:0px;top:469px;width:381px;height:385px;background:#f7f8f8"></div>
<div class="t" style="left:12.4px;top:481.0px;font-size:14.20px;letter-spacing:-0.047px;font-weight:700;color:#3a3a64;">Displaying data for 57 people and</div>
<div class="t" style="left:12.4px;top:499.4px;font-size:14.20px;letter-spacing:-0.017px;font-weight:700;color:#3a3a64;">4 placeholders</div>
<div class="t" style="right:1108.2px;top:531.0px;font-size:12.3px;font-weight:400;color:#55555c">640h</div>
<div class="t" style="right:1108.2px;top:584.8px;font-size:12.3px;font-weight:400;color:#55555c">512h</div>
<div class="t" style="right:1108.2px;top:638.3px;font-size:12.3px;font-weight:400;color:#55555c">384h</div>
<div class="t" style="right:1108.2px;top:691.8px;font-size:12.3px;font-weight:400;color:#55555c">256h</div>
<div class="t" style="right:1108.2px;top:745.2px;font-size:12.3px;font-weight:400;color:#55555c">128h</div>
<div class="t" style="right:1108.2px;top:791.0px;font-size:12.3px;font-weight:400;color:#55555c">0h</div>
<div style="position:absolute;left:7.3px;top:777.2px;width:322.5px;height:69.8px;background:#fff;border-radius:6px"></div>
<div style="position:absolute;left:15px;top:789.2px;width:10px;height:10px;background:#3f51d8"></div>
<div class="t" style="left:30.3px;top:785.0px;font-size:12.72px;letter-spacing:0.000px;font-weight:400;color:#3c3c60;">Confirmed Workload</div>
<div style="position:absolute;left:154px;top:789.2px;width:10px;height:10px;background:#6cc4ea"></div>
<div class="t" style="left:169.5px;top:785.0px;font-size:12.67px;letter-spacing:0.000px;font-weight:400;color:#3c3c60;">Tentative Workload</div>
<div style="position:absolute;left:15px;top:807.5px;width:10.2px;height:10.2px;background:#e0baf2;border-radius:50%"></div>
<div class="t" style="left:30.3px;top:802.6px;font-size:12.79px;letter-spacing:0.000px;font-weight:400;color:#3c3c60;">Effective Capacity</div>
<div style="position:absolute;left:141px;top:807.5px;width:10.2px;height:10.2px;background:#9a98b2;border-radius:50%"></div>
<div class="t" style="left:156.0px;top:802.6px;font-size:12.83px;letter-spacing:0.000px;font-weight:400;color:#3c3c60;">Contracted Capacity</div>
<svg style="position:absolute;left:14.5px;top:825px" width="11" height="11" viewBox="0 0 11 11"><defs><clipPath id="lc"><circle cx="5.5" cy="5.5" r="5.2"/></clipPath></defs><g clip-path="url(#lc)" stroke="#d6d6dc" stroke-width="1.7"><path d="M-2 3l10 10M1 0l10 10M5-1l8 8M-4 6l8 8"/></g></svg>
<div class="t" style="left:30.3px;top:821.2px;font-size:12.73px;letter-spacing:0.000px;font-weight:400;color:#3c3c60;">Time Off</div>
<svg style="position:absolute;left:0;top:0" width="1480" height="854" viewBox="0 0 1480 854"><defs><pattern id="hatch" width="5" height="5" patternUnits="userSpaceOnUse" patternTransform="rotate(-45)"><rect width="5" height="5" fill="#fff"/><path d="M0.5 0V5" stroke="#e0e0e5" stroke-width="1"/></pattern></defs><rect x="381" y="469" width="1099" height="385" fill="#fff"/><rect x="422.18" y="469" width="1.5" height="339.8" fill="#e5e5ea"/><rect x="464.46" y="469" width="1.5" height="339.8" fill="#e5e5ea"/><rect x="506.74" y="469" width="1.5" height="339.8" fill="#e5e5ea"/><rect x="549.02" y="469" width="1.5" height="339.8" fill="#e5e5ea"/><rect x="591.30" y="469" width="1.5" height="339.8" fill="#e5e5ea"/><rect x="633.58" y="469" width="1.5" height="339.8" fill="#e5e5ea"/><rect x="675.86" y="469" width="1.5" height="339.8" fill="#e5e5ea"/><rect x="718.14" y="469" width="1.5" height="339.8" fill="#e5e5ea"/><rect x="760.42" y="469" width="1.5" height="339.8" fill="#e5e5ea"/><rect x="802.70" y="469" width="1.5" height="339.8" fill="#e5e5ea"/><rect x="844.98" y="469" width="1.5" height="339.8" fill="#e5e5ea"/><rect x="887.26" y="469" width="1.5" height="339.8" fill="#e5e5ea"/><rect x="929.54" y="469" width="1.5" height="339.8" fill="#e5e5ea"/><rect x="971.82" y="469" width="1.5" height="339.8" fill="#e5e5ea"/><rect x="1014.10" y="469" width="1.5" height="339.8" fill="#e5e5ea"/><rect x="1056.38" y="469" width="1.5" height="339.8" fill="#e5e5ea"/><rect x="1098.66" y="469" width="1.5" height="339.8" fill="#e5e5ea"/><rect x="1140.94" y="469" width="1.5" height="339.8" fill="#e5e5ea"/><rect x="1183.22" y="469" width="1.5" height="339.8" fill="#e5e5ea"/><rect x="1225.50" y="469" width="1.5" height="339.8" fill="#e5e5ea"/><rect x="1267.78" y="469" width="1.5" height="339.8" fill="#e5e5ea"/><rect x="1310.06" y="469" width="1.5" height="339.8" fill="#e5e5ea"/><rect x="1352.34" y="469" width="1.5" height="339.8" fill="#e5e5ea"/><rect x="1394.62" y="469" width="1.5" height="339.8" fill="#e5e5ea"/><rect x="1436.90" y="469" width="1.5" height="339.8" fill="#e5e5ea"/><path d="M385.20 617.90C387.96 617.90 390.72 617.90 393.48 617.90C396.30 617.90 399.12 617.90 401.94 617.90C404.76 617.90 407.58 617.90 410.40 617.90C413.21 617.90 416.03 621.30 418.85 621.30C421.67 621.30 424.49 617.90 427.31 617.90C430.13 617.90 432.95 617.90 435.76 617.90C438.58 617.90 441.40 617.90 444.22 617.90C447.04 617.90 449.86 617.90 452.68 617.90C455.49 617.90 458.31 621.30 461.13 621.30C463.95 621.30 466.77 617.90 469.59 617.90C472.41 617.90 475.23 617.90 478.04 617.90C480.86 617.90 483.68 617.90 486.50 617.90C489.32 617.90 492.14 617.90 494.96 617.90C497.77 617.90 500.59 621.30 503.41 621.30C506.23 621.30 509.05 618.00 511.87 618.00C514.69 618.00 517.51 618.00 520.32 618.00C523.14 618.00 525.96 618.00 528.78 618.00C531.60 618.00 534.42 618.00 537.24 618.00C540.05 618.00 542.87 621.00 545.69 621.00C548.51 621.00 551.33 618.00 554.15 618.00C556.97 618.00 559.79 618.00 562.60 618.00C565.42 618.00 568.24 618.00 571.06 618.00C573.88 618.00 576.70 618.00 579.52 618.00C582.33 618.00 585.15 621.00 587.97 621.00C590.79 621.00 593.61 618.00 596.43 618.00C599.25 618.00 602.07 618.00 604.88 618.00C607.70 618.00 610.52 618.00 613.34 618.00C616.16 618.00 618.98 618.00 621.80 618.00C624.61 618.00 627.43 621.00 630.25 621.00C633.07 621.00 635.89 618.00 638.71 618.00C641.53 618.00 644.35 618.00 647.16 618.00C649.98 618.00 652.80 618.00 655.62 618.00C658.44 618.00 661.26 618.00 664.08 618.00C666.89 618.00 669.71 621.00 672.53 621.00C675.35 621.00 678.17 618.00 680.99 618.00C683.81 618.00 686.63 618.00 689.44 618.00C692.26 618.00 695.08 618.00 697.90 618.00C700.72 618.00 703.54 618.00 706.36 618.00C709.17 618.00 711.99 619.50 714.81 619.50C717.63 619.50 720.45 614.00 723.27 614.00C726.09 614.00 728.91 614.00 731.72 614.00C734.54 614.00 737.36 614.00 740.18 614.00C743.00 614.00 745.82 614.00 748.64 614.00C751.45 614.00 754.27 614.00 757.09 614.00C759.91 614.00 762.73 614.00 765.55 614.00C768.37 614.00 771.19 614.00 774.00 614.00C776.82 614.00 779.64 614.00 782.46 614.00C785.28 614.00 788.10 614.00 790.92 614.00C793.73 614.00 796.55 614.00 799.37 614.00C802.19 614.00 805.01 614.00 807.83 614.00C810.65 614.00 813.47 614.00 816.28 614.00C819.10 614.00 821.92 614.00 824.74 614.00C827.56 614.00 830.38 614.00 833.20 614.00C836.01 614.00 838.83 614.00 841.65 614.00C844.47 614.00 847.29 614.00 850.11 614.00C852.93 614.00 855.75 614.00 858.56 614.00C861.38 614.00 864.20 614.00 867.02 614.00C869.84 614.00 872.66 614.00 875.48 614.00C878.29 614.00 881.11 614.00 883.93 614.00C886.75 614.00 889.57 612.00 892.39 612.00C895.21 612.00 898.03 612.00 900.84 612.00C903.66 612.00 906.48 612.00 909.30 612.00C912.12 612.00 914.94 612.00 917.76 612.00C920.57 612.00 923.39 612.00 926.21 612.00C929.03 612.00 931.85 612.00 934.67 612.00C937.49 612.00 940.31 612.00 943.12 612.00C945.94 612.00 948.76 612.00 951.58 612.00C954.40 612.00 957.22 612.00 960.04 612.00C962.85 612.00 965.67 612.00 968.49 612.00C971.31 612.00 974.13 612.00 976.95 612.00C979.77 612.00 982.59 612.00 985.40 612.00C988.22 612.00 991.04 612.00 993.86 612.00C996.68 612.00 999.50 612.00 1002.32 612.00C1005.13 612.00 1007.95 619.50 1010.77 619.50C1013.59 619.50 1016.41 617.60 1019.23 617.60C1022.05 617.60 1024.87 617.60 1027.68 617.60C1030.50 617.60 1033.32 617.60 1036.14 617.60C1038.96 617.60 1041.78 617.60 1044.60 617.60C1047.41 617.60 1050.23 621.30 1053.05 621.30C1055.87 621.30 1058.69 618.30 1061.51 618.30C1064.33 618.30 1067.15 621.30 1069.96 621.30C1072.78 621.30 1075.60 621.30 1078.42 621.30C1081.24 621.30 1084.06 621.30 1086.88 621.30C1089.69 621.30 1092.51 624.60 1095.33 624.60C1098.15 624.60 1100.97 621.30 1103.79 621.30C1106.61 621.30 1109.43 621.30 1112.24 621.30C1115.06 621.30 1117.88 621.30 1120.70 621.30C1123.52 621.30 1126.34 621.30 1129.16 621.30C1131.97 621.30 1134.79 624.60 1137.61 624.60C1140.43 624.60 1143.25 624.60 1146.07 624.60C1148.89 624.60 1151.71 624.60 1154.52 624.60C1157.34 624.60 1160.16 624.60 1162.98 624.60C1165.80 624.60 1168.62 624.60 1171.44 624.60C1174.25 624.60 1177.07 628.00 1179.89 628.00C1182.71 628.00 1185.53 624.60 1188.35 624.60C1191.17 624.60 1193.99 624.60 1196.80 624.60C1199.62 624.60 1202.44 624.60 1205.26 624.60C1208.08 624.60 1210.90 624.60 1213.72 624.60C1216.53 624.60 1219.35 628.30 1222.17 628.30C1224.99 628.30 1227.81 624.40 1230.63 624.40C1233.45 624.40 1236.27 624.40 1239.08 624.40C1241.90 624.40 1244.72 628.10 1247.54 628.10C1250.36 628.10 1253.18 628.10 1256.00 628.10C1258.81 628.10 1261.63 628.10 1264.45 628.10C1267.27 628.10 1270.09 628.10 1272.91 628.10C1275.73 628.10 1278.55 628.10 1281.36 628.10C1284.18 628.10 1287.00 628.10 1289.82 628.10C1292.64 628.10 1295.46 628.10 1298.28 628.10C1301.09 628.10 1303.91 628.10 1306.73 628.10C1309.55 628.10 1312.37 628.10 1315.19 628.10C1318.01 628.10 1320.83 628.10 1323.64 628.10C1326.46 628.10 1329.28 628.10 1332.10 628.10C1334.92 628.10 1337.74 628.10 1340.56 628.10C1343.37 628.10 1346.19 628.10 1349.01 628.10C1351.83 628.10 1354.65 628.10 1357.47 628.10C1360.29 628.10 1363.11 628.10 1365.92 628.10C1368.74 628.10 1371.56 628.10 1374.38 628.10C1377.20 628.10 1380.02 628.10 1382.84 628.10C1385.65 628.10 1388.47 628.10 1391.29 628.10C1394.11 628.10 1396.93 628.10 1399.75 628.10C1402.57 628.10 1405.39 628.10 1408.20 628.10C1411.02 628.10 1413.84 628.10 1416.66 628.10C1419.48 628.10 1422.30 628.10 1425.12 628.10C1427.93 628.10 1430.75 628.10 1433.57 628.10C1436.39 628.10 1439.21 628.10 1442.03 628.10C1444.85 628.10 1447.67 628.10 1450.48 628.10C1453.30 628.10 1456.12 628.10 1458.94 628.10C1461.76 628.10 1464.58 628.10 1467.40 628.10C1470.20 628.10 1473.00 628.10 1475.80 628.10 L1475.80 628.10 C1473.00 628.10 1470.20 628.10 1467.40 628.10C1464.58 628.10 1461.76 631.24 1458.94 631.30C1456.12 631.36 1453.30 631.34 1450.48 631.40C1447.67 631.46 1444.85 634.27 1442.03 634.40C1439.21 634.52 1436.39 634.60 1433.57 634.60C1430.75 634.60 1427.93 634.60 1425.12 634.60C1422.30 634.60 1419.48 634.60 1416.66 634.60C1413.84 634.60 1411.02 634.60 1408.20 634.60C1405.39 634.60 1402.57 634.60 1399.75 634.60C1396.93 634.60 1394.11 637.94 1391.29 638.00C1388.47 638.06 1385.65 638.10 1382.84 638.10C1380.02 638.10 1377.20 638.10 1374.38 638.10C1371.56 638.10 1368.74 638.10 1365.92 638.10C1363.11 638.10 1360.29 638.10 1357.47 638.10C1354.65 638.10 1351.83 638.10 1349.01 638.10C1346.19 638.10 1343.37 638.10 1340.56 638.10C1337.74 638.10 1334.92 638.10 1332.10 638.10C1329.28 638.10 1326.46 638.10 1323.64 638.10C1320.83 638.10 1318.01 638.10 1315.19 638.10C1312.37 638.10 1309.55 638.10 1306.73 638.10C1303.91 638.10 1301.09 638.10 1298.28 638.10C1295.46 638.10 1292.64 638.10 1289.82 638.10C1287.00 638.10 1284.18 638.10 1281.36 638.10C1278.55 638.10 1275.73 638.10 1272.91 638.10C1270.09 638.10 1267.27 667.60 1264.45 667.60C1261.63 667.60 1258.81 638.50 1256.00 638.50C1253.18 638.50 1250.36 661.50 1247.54 661.50C1244.72 661.50 1241.90 634.60 1239.08 634.60C1236.27 634.60 1233.45 634.60 1230.63 634.60C1227.81 634.60 1224.99 634.70 1222.17 634.70C1219.35 634.70 1216.53 631.30 1213.72 631.30C1210.90 631.30 1208.08 631.30 1205.26 631.30C1202.44 631.30 1199.62 631.30 1196.80 631.30C1193.99 631.30 1191.17 631.30 1188.35 631.30C1185.53 631.30 1182.71 657.80 1179.89 657.80C1177.07 657.80 1174.25 624.60 1171.44 624.60C1168.62 624.60 1165.80 624.60 1162.98 624.60C1160.16 624.60 1157.34 624.60 1154.52 624.60C1151.71 624.60 1148.89 624.60 1146.07 624.60C1143.25 624.60 1140.43 624.60 1137.61 624.60C1134.79 624.60 1131.97 621.30 1129.16 621.30C1126.34 621.30 1123.52 621.30 1120.70 621.30C1117.88 621.30 1115.06 621.30 1112.24 621.30C1109.43 621.30 1106.61 621.30 1103.79 621.30C1100.97 621.30 1098.15 624.60 1095.33 624.60C1092.51 624.60 1089.69 621.30 1086.88 621.30C1084.06 621.30 1081.24 621.30 1078.42 621.30C1075.60 621.30 1072.78 621.30 1069.96 621.30C1067.15 621.30 1064.33 618.30 1061.51 618.30C1058.69 618.30 1055.87 621.30 1053.05 621.30C1050.23 621.30 1047.41 617.60 1044.60 617.60C1041.78 617.60 1038.96 617.60 1036.14 617.60C1033.32 617.60 1030.50 617.70 1027.68 617.90C1024.87 618.10 1022.05 654.80 1019.23 654.80C1016.41 654.80 1013.59 624.32 1010.77 622.00C1007.95 619.68 1005.13 618.10 1002.32 618.10C999.50 618.10 996.68 618.10 993.86 618.10C991.04 618.10 988.22 618.10 985.40 618.10C982.59 618.10 979.77 641.00 976.95 641.00C974.13 641.00 971.31 622.69 968.49 621.00C965.67 619.31 962.85 618.10 960.04 618.10C957.22 618.10 954.40 618.10 951.58 618.10C948.76 618.10 945.94 618.10 943.12 618.10C940.31 618.10 937.49 618.10 934.67 618.10C931.85 618.10 929.03 620.70 926.21 620.70C923.39 620.70 920.57 617.70 917.76 617.70C914.94 617.70 912.12 617.70 909.30 617.70C906.48 617.70 903.66 617.81 900.84 618.00C898.03 618.19 895.21 621.04 892.39 624.00C889.57 626.96 886.75 641.00 883.93 641.00C881.11 641.00 878.29 621.80 875.48 621.80C872.66 621.80 869.84 621.80 867.02 621.80C864.20 621.80 861.38 621.80 858.56 621.80C855.75 621.80 852.93 621.80 850.11 621.80C847.29 621.80 844.47 621.80 841.65 621.80C838.83 621.80 836.01 621.80 833.20 621.80C830.38 621.80 827.56 621.80 824.74 621.80C821.92 621.80 819.10 621.80 816.28 621.80C813.47 621.80 810.65 621.80 807.83 621.80C805.01 621.80 802.19 621.80 799.37 621.80C796.55 621.80 793.73 621.80 790.92 621.80C788.10 621.80 785.28 621.80 782.46 621.80C779.64 621.80 776.82 621.80 774.00 621.80C771.19 621.80 768.37 621.80 765.55 621.80C762.73 621.80 759.91 621.80 757.09 621.80C754.27 621.80 751.45 621.80 748.64 621.80C745.82 621.80 743.00 621.80 740.18 621.80C737.36 621.80 734.54 621.80 731.72 621.80C728.91 621.80 726.09 621.80 723.27 621.80C720.45 621.80 717.63 669.00 714.81 669.00C711.99 669.00 709.17 641.48 706.36 635.00C703.54 628.52 700.72 621.40 697.90 621.40C695.08 621.40 692.26 624.40 689.44 624.40C686.63 624.40 683.81 624.40 680.99 624.40C678.17 624.40 675.35 627.00 672.53 627.00C669.71 627.00 666.89 624.40 664.08 624.40C661.26 624.40 658.44 624.40 655.62 624.40C652.80 624.40 649.98 624.40 647.16 624.40C644.35 624.40 641.53 624.40 638.71 624.40C635.89 624.40 633.07 627.30 630.25 627.30C627.43 627.30 624.61 624.40 621.80 624.40C618.98 624.40 616.16 624.40 613.34 624.40C610.52 624.40 607.70 624.40 604.88 624.40C602.07 624.40 599.25 644.50 596.43 644.50C593.61 644.50 590.79 632.62 587.97 632.00C585.15 631.38 582.33 631.00 579.52 631.00C576.70 631.00 573.88 631.00 571.06 631.00C568.24 631.00 565.42 631.00 562.60 631.00C559.79 631.00 556.97 631.00 554.15 631.00C551.33 631.00 548.51 634.70 545.69 634.70C542.87 634.70 540.05 631.00 537.24 631.00C534.42 631.00 531.60 631.00 528.78 631.00C525.96 631.00 523.14 631.00 520.32 631.00C517.51 631.00 514.69 631.00 511.87 631.00C509.05 631.00 506.23 634.30 503.41 634.30C500.59 634.30 497.77 631.30 494.96 631.30C492.14 631.30 489.32 631.30 486.50 631.30C483.68 631.30 480.86 631.30 478.04 631.30C475.23 631.30 472.41 631.30 469.59 631.30C466.77 631.30 463.95 634.70 461.13 634.70C458.31 634.70 455.49 631.30 452.68 631.30C449.86 631.30 447.04 631.30 444.22 631.30C441.40 631.30 438.58 631.30 435.76 631.30C432.95 631.30 430.13 684.50 427.31 684.50C424.49 684.50 421.67 629.65 418.85 629.00C416.03 628.35 413.21 628.00 410.40 628.00C407.58 628.00 404.76 628.00 401.94 628.00C399.12 628.00 396.30 628.00 393.48 628.00C390.72 628.00 387.96 628.00 385.20 628.00 Z" fill="url(#hatch)"/><path d="M385.20 617.90C387.96 617.90 390.72 617.90 393.48 617.90C396.30 617.90 399.12 617.90 401.94 617.90C404.76 617.90 407.58 617.90 410.40 617.90C413.21 617.90 416.03 621.30 418.85 621.30C421.67 621.30 424.49 617.90 427.31 617.90C430.13 617.90 432.95 617.90 435.76 617.90C438.58 617.90 441.40 617.90 444.22 617.90C447.04 617.90 449.86 617.90 452.68 617.90C455.49 617.90 458.31 621.30 461.13 621.30C463.95 621.30 466.77 617.90 469.59 617.90C472.41 617.90 475.23 617.90 478.04 617.90C480.86 617.90 483.68 617.90 486.50 617.90C489.32 617.90 492.14 617.90 494.96 617.90C497.77 617.90 500.59 621.30 503.41 621.30C506.23 621.30 509.05 618.00 511.87 618.00C514.69 618.00 517.51 618.00 520.32 618.00C523.14 618.00 525.96 618.00 528.78 618.00C531.60 618.00 534.42 618.00 537.24 618.00C540.05 618.00 542.87 621.00 545.69 621.00C548.51 621.00 551.33 618.00 554.15 618.00C556.97 618.00 559.79 618.00 562.60 618.00C565.42 618.00 568.24 618.00 571.06 618.00C573.88 618.00 576.70 618.00 579.52 618.00C582.33 618.00 585.15 621.00 587.97 621.00C590.79 621.00 593.61 618.00 596.43 618.00C599.25 618.00 602.07 618.00 604.88 618.00C607.70 618.00 610.52 618.00 613.34 618.00C616.16 618.00 618.98 618.00 621.80 618.00C624.61 618.00 627.43 621.00 630.25 621.00C633.07 621.00 635.89 618.00 638.71 618.00C641.53 618.00 644.35 618.00 647.16 618.00C649.98 618.00 652.80 618.00 655.62 618.00C658.44 618.00 661.26 618.00 664.08 618.00C666.89 618.00 669.71 621.00 672.53 621.00C675.35 621.00 678.17 618.00 680.99 618.00C683.81 618.00 686.63 618.00 689.44 618.00C692.26 618.00 695.08 618.00 697.90 618.00C700.72 618.00 703.54 618.00 706.36 618.00C709.17 618.00 711.99 619.50 714.81 619.50C717.63 619.50 720.45 614.00 723.27 614.00C726.09 614.00 728.91 614.00 731.72 614.00C734.54 614.00 737.36 614.00 740.18 614.00C743.00 614.00 745.82 614.00 748.64 614.00C751.45 614.00 754.27 614.00 757.09 614.00C759.91 614.00 762.73 614.00 765.55 614.00C768.37 614.00 771.19 614.00 774.00 614.00C776.82 614.00 779.64 614.00 782.46 614.00C785.28 614.00 788.10 614.00 790.92 614.00C793.73 614.00 796.55 614.00 799.37 614.00C802.19 614.00 805.01 614.00 807.83 614.00C810.65 614.00 813.47 614.00 816.28 614.00C819.10 614.00 821.92 614.00 824.74 614.00C827.56 614.00 830.38 614.00 833.20 614.00C836.01 614.00 838.83 614.00 841.65 614.00C844.47 614.00 847.29 614.00 850.11 614.00C852.93 614.00 855.75 614.00 858.56 614.00C861.38 614.00 864.20 614.00 867.02 614.00C869.84 614.00 872.66 614.00 875.48 614.00C878.29 614.00 881.11 614.00 883.93 614.00C886.75 614.00 889.57 612.00 892.39 612.00C895.21 612.00 898.03 612.00 900.84 612.00C903.66 612.00 906.48 612.00 909.30 612.00C912.12 612.00 914.94 612.00 917.76 612.00C920.57 612.00 923.39 612.00 926.21 612.00C929.03 612.00 931.85 612.00 934.67 612.00C937.49 612.00 940.31 612.00 943.12 612.00C945.94 612.00 948.76 612.00 951.58 612.00C954.40 612.00 957.22 612.00 960.04 612.00C962.85 612.00 965.67 612.00 968.49 612.00C971.31 612.00 974.13 612.00 976.95 612.00C979.77 612.00 982.59 612.00 985.40 612.00C988.22 612.00 991.04 612.00 993.86 612.00C996.68 612.00 999.50 612.00 1002.32 612.00C1005.13 612.00 1007.95 619.50 1010.77 619.50C1013.59 619.50 1016.41 617.60 1019.23 617.60C1022.05 617.60 1024.87 617.60 1027.68 617.60C1030.50 617.60 1033.32 617.60 1036.14 617.60C1038.96 617.60 1041.78 617.60 1044.60 617.60C1047.41 617.60 1050.23 621.30 1053.05 621.30C1055.87 621.30 1058.69 618.30 1061.51 618.30C1064.33 618.30 1067.15 621.30 1069.96 621.30C1072.78 621.30 1075.60 621.30 1078.42 621.30C1081.24 621.30 1084.06 621.30 1086.88 621.30C1089.69 621.30 1092.51 624.60 1095.33 624.60C1098.15 624.60 1100.97 621.30 1103.79 621.30C1106.61 621.30 1109.43 621.30 1112.24 621.30C1115.06 621.30 1117.88 621.30 1120.70 621.30C1123.52 621.30 1126.34 621.30 1129.16 621.30C1131.97 621.30 1134.79 624.60 1137.61 624.60C1140.43 624.60 1143.25 624.60 1146.07 624.60C1148.89 624.60 1151.71 624.60 1154.52 624.60C1157.34 624.60 1160.16 624.60 1162.98 624.60C1165.80 624.60 1168.62 624.60 1171.44 624.60C1174.25 624.60 1177.07 628.00 1179.89 628.00C1182.71 628.00 1185.53 624.60 1188.35 624.60C1191.17 624.60 1193.99 624.60 1196.80 624.60C1199.62 624.60 1202.44 624.60 1205.26 624.60C1208.08 624.60 1210.90 624.60 1213.72 624.60C1216.53 624.60 1219.35 628.30 1222.17 628.30C1224.99 628.30 1227.81 624.40 1230.63 624.40C1233.45 624.40 1236.27 624.40 1239.08 624.40C1241.90 624.40 1244.72 628.10 1247.54 628.10C1250.36 628.10 1253.18 628.10 1256.00 628.10C1258.81 628.10 1261.63 628.10 1264.45 628.10C1267.27 628.10 1270.09 628.10 1272.91 628.10C1275.73 628.10 1278.55 628.10 1281.36 628.10C1284.18 628.10 1287.00 628.10 1289.82 628.10C1292.64 628.10 1295.46 628.10 1298.28 628.10C1301.09 628.10 1303.91 628.10 1306.73 628.10C1309.55 628.10 1312.37 628.10 1315.19 628.10C1318.01 628.10 1320.83 628.10 1323.64 628.10C1326.46 628.10 1329.28 628.10 1332.10 628.10C1334.92 628.10 1337.74 628.10 1340.56 628.10C1343.37 628.10 1346.19 628.10 1349.01 628.10C1351.83 628.10 1354.65 628.10 1357.47 628.10C1360.29 628.10 1363.11 628.10 1365.92 628.10C1368.74 628.10 1371.56 628.10 1374.38 628.10C1377.20 628.10 1380.02 628.10 1382.84 628.10C1385.65 628.10 1388.47 628.10 1391.29 628.10C1394.11 628.10 1396.93 628.10 1399.75 628.10C1402.57 628.10 1405.39 628.10 1408.20 628.10C1411.02 628.10 1413.84 628.10 1416.66 628.10C1419.48 628.10 1422.30 628.10 1425.12 628.10C1427.93 628.10 1430.75 628.10 1433.57 628.10C1436.39 628.10 1439.21 628.10 1442.03 628.10C1444.85 628.10 1447.67 628.10 1450.48 628.10C1453.30 628.10 1456.12 628.10 1458.94 628.10C1461.76 628.10 1464.58 628.10 1467.40 628.10C1470.20 628.10 1473.00 628.10 1475.80 628.10" fill="none" stroke="#b0b0ba" stroke-width="1.1"/><rect x="380.85" y="635.1" width="7.856" height="13.0" fill="#6cc5ea"/><rect x="380.85" y="648.1" width="7.856" height="159.7" fill="#3f57de"/><rect x="389.31" y="635.1" width="7.856" height="13.0" fill="#6cc5ea"/><rect x="389.31" y="648.1" width="7.856" height="159.7" fill="#3f57de"/><rect x="397.76" y="636.6" width="7.856" height="12.5" fill="#6cc5ea"/><rect x="397.76" y="649.1" width="7.856" height="158.7" fill="#3f57de"/><rect x="406.22" y="636.6" width="7.856" height="12.5" fill="#6cc5ea"/><rect x="406.22" y="649.1" width="7.856" height="158.7" fill="#3f57de"/><rect x="414.67" y="650.0" width="7.856" height="12.7" fill="#6cc5ea"/><rect x="414.67" y="662.7" width="7.856" height="145.1" fill="#3f57de"/><rect x="423.13" y="693.0" width="7.856" height="6.5" fill="#6cc5ea"/><rect x="423.13" y="699.5" width="7.856" height="108.3" fill="#3f57de"/><rect x="431.59" y="635.9" width="7.856" height="13.2" fill="#6cc5ea"/><rect x="431.59" y="649.1" width="7.856" height="158.7" fill="#3f57de"/><rect x="440.04" y="634.7" width="7.856" height="12.2" fill="#6cc5ea"/><rect x="440.04" y="646.9" width="7.856" height="160.9" fill="#3f57de"/><rect x="448.50" y="634.7" width="7.856" height="12.2" fill="#6cc5ea"/><rect x="448.50" y="646.9" width="7.856" height="160.9" fill="#3f57de"/><rect x="456.95" y="639.6" width="7.856" height="12.2" fill="#6cc5ea"/><rect x="456.95" y="651.8" width="7.856" height="156.0" fill="#3f57de"/><rect x="465.41" y="632.5" width="7.856" height="12.2" fill="#6cc5ea"/><rect x="465.41" y="644.7" width="7.856" height="163.1" fill="#3f57de"/><rect x="473.87" y="628.3" width="7.856" height="12.8" fill="#6cc5ea"/><rect x="473.87" y="641.1" width="7.856" height="166.7" fill="#3f57de"/><rect x="482.32" y="633.7" width="7.856" height="13.2" fill="#6cc5ea"/><rect x="482.32" y="646.9" width="7.856" height="160.9" fill="#3f57de"/><rect x="490.78" y="632.5" width="7.856" height="15.3" fill="#6cc5ea"/><rect x="490.78" y="647.8" width="7.856" height="160.0" fill="#3f57de"/><rect x="499.23" y="634.3" width="7.856" height="17.5" fill="#6cc5ea"/><rect x="499.23" y="651.8" width="7.856" height="156.0" fill="#3f57de"/><rect x="507.69" y="603.9" width="7.856" height="22.2" fill="#6cc5ea"/><rect x="507.69" y="626.1" width="7.856" height="181.7" fill="#3f57de"/><rect x="516.15" y="594.2" width="7.856" height="25.9" fill="#6cc5ea"/><rect x="516.15" y="620.1" width="7.856" height="187.7" fill="#3f57de"/><rect x="524.60" y="591.1" width="7.856" height="26.1" fill="#6cc5ea"/><rect x="524.60" y="617.2" width="7.856" height="190.6" fill="#3f57de"/><rect x="533.06" y="586.8" width="7.856" height="28.1" fill="#6cc5ea"/><rect x="533.06" y="614.9" width="7.856" height="192.9" fill="#3f57de"/><rect x="541.51" y="590.1" width="7.856" height="29.0" fill="#6cc5ea"/><rect x="541.51" y="619.1" width="7.856" height="188.7" fill="#3f57de"/><rect x="549.97" y="585.9" width="7.856" height="32.0" fill="#6cc5ea"/><rect x="549.97" y="617.9" width="7.856" height="189.9" fill="#3f57de"/><rect x="558.43" y="587.6" width="7.856" height="32.2" fill="#6cc5ea"/><rect x="558.43" y="619.8" width="7.856" height="188.0" fill="#3f57de"/><rect x="566.88" y="591.1" width="7.856" height="32.0" fill="#6cc5ea"/><rect x="566.88" y="623.1" width="7.856" height="184.7" fill="#3f57de"/><rect x="575.34" y="591.1" width="7.856" height="32.0" fill="#6cc5ea"/><rect x="575.34" y="623.1" width="7.856" height="184.7" fill="#3f57de"/><rect x="583.79" y="594.1" width="7.856" height="32.0" fill="#6cc5ea"/><rect x="583.79" y="626.1" width="7.856" height="181.7" fill="#3f57de"/><rect x="592.25" y="599.1" width="7.856" height="32.0" fill="#6cc5ea"/><rect x="592.25" y="631.1" width="7.856" height="176.7" fill="#3f57de"/><rect x="600.71" y="569.0" width="7.856" height="38.7" fill="#6cc5ea"/><rect x="600.71" y="607.7" width="7.856" height="200.1" fill="#3f57de"/><rect x="609.16" y="570.8" width="7.856" height="38.2" fill="#6cc5ea"/><rect x="609.16" y="609.0" width="7.856" height="198.8" fill="#3f57de"/><rect x="617.62" y="572.3" width="7.856" height="36.7" fill="#6cc5ea"/><rect x="617.62" y="609.0" width="7.856" height="198.8" fill="#3f57de"/><rect x="626.07" y="576.0" width="7.856" height="36.8" fill="#6cc5ea"/><rect x="626.07" y="612.8" width="7.856" height="195.0" fill="#3f57de"/><rect x="634.53" y="570.8" width="7.856" height="39.1" fill="#6cc5ea"/><rect x="634.53" y="609.9" width="7.856" height="197.9" fill="#3f57de"/><rect x="642.99" y="576.0" width="7.856" height="38.7" fill="#6cc5ea"/><rect x="642.99" y="614.7" width="7.856" height="193.1" fill="#3f57de"/><rect x="651.44" y="580.8" width="7.856" height="39.1" fill="#6cc5ea"/><rect x="651.44" y="619.9" width="7.856" height="187.9" fill="#3f57de"/><rect x="659.90" y="580.2" width="7.856" height="38.7" fill="#6cc5ea"/><rect x="659.90" y="618.9" width="7.856" height="188.9" fill="#3f57de"/><rect x="668.35" y="578.0" width="7.856" height="41.9" fill="#6cc5ea"/><rect x="668.35" y="619.9" width="7.856" height="187.9" fill="#3f57de"/><rect x="676.81" y="575.0" width="7.856" height="45.9" fill="#6cc5ea"/><rect x="676.81" y="620.9" width="7.856" height="186.9" fill="#3f57de"/><rect x="685.27" y="579.0" width="7.856" height="41.9" fill="#6cc5ea"/><rect x="685.27" y="620.9" width="7.856" height="186.9" fill="#3f57de"/><rect x="693.72" y="563.7" width="7.856" height="42.4" fill="#6cc5ea"/><rect x="693.72" y="606.1" width="7.856" height="201.7" fill="#3f57de"/><rect x="702.18" y="595.4" width="7.856" height="36.7" fill="#6cc5ea"/><rect x="702.18" y="632.1" width="7.856" height="175.7" fill="#3f57de"/><rect x="710.63" y="631.4" width="7.856" height="33.4" fill="#6cc5ea"/><rect x="710.63" y="664.8" width="7.856" height="143.0" fill="#3f57de"/><rect x="719.09" y="568.6" width="7.856" height="42.4" fill="#6cc5ea"/><rect x="719.09" y="611.0" width="7.856" height="196.8" fill="#3f57de"/><rect x="727.55" y="567.1" width="7.856" height="41.9" fill="#6cc5ea"/><rect x="727.55" y="609.0" width="7.856" height="198.8" fill="#3f57de"/><rect x="736.00" y="568.6" width="7.856" height="42.4" fill="#6cc5ea"/><rect x="736.00" y="611.0" width="7.856" height="196.8" fill="#3f57de"/><rect x="744.46" y="566.1" width="7.856" height="42.2" fill="#6cc5ea"/><rect x="744.46" y="608.3" width="7.856" height="199.5" fill="#3f57de"/><rect x="752.91" y="569.3" width="7.856" height="42.7" fill="#6cc5ea"/><rect x="752.91" y="612.0" width="7.856" height="195.8" fill="#3f57de"/><rect x="761.37" y="563.8" width="7.856" height="45.4" fill="#6cc5ea"/><rect x="761.37" y="609.2" width="7.856" height="198.6" fill="#3f57de"/><rect x="769.83" y="570.4" width="7.856" height="42.5" fill="#6cc5ea"/><rect x="769.83" y="612.9" width="7.856" height="194.9" fill="#3f57de"/><rect x="778.28" y="565.3" width="7.856" height="45.4" fill="#6cc5ea"/><rect x="778.28" y="610.7" width="7.856" height="197.1" fill="#3f57de"/><rect x="786.74" y="567.1" width="7.856" height="45.8" fill="#6cc5ea"/><rect x="786.74" y="612.9" width="7.856" height="194.9" fill="#3f57de"/><rect x="795.19" y="567.1" width="7.856" height="45.8" fill="#6cc5ea"/><rect x="795.19" y="612.9" width="7.856" height="194.9" fill="#3f57de"/><rect x="803.65" y="562.9" width="7.856" height="45.1" fill="#6cc5ea"/><rect x="803.65" y="608.0" width="7.856" height="199.8" fill="#3f57de"/><rect x="812.11" y="562.9" width="7.856" height="45.1" fill="#6cc5ea"/><rect x="812.11" y="608.0" width="7.856" height="199.8" fill="#3f57de"/><rect x="820.56" y="567.4" width="7.856" height="42.5" fill="#6cc5ea"/><rect x="820.56" y="609.9" width="7.856" height="197.9" fill="#3f57de"/><rect x="829.02" y="569.0" width="7.856" height="42.0" fill="#6cc5ea"/><rect x="829.02" y="611.0" width="7.856" height="196.8" fill="#3f57de"/><rect x="837.47" y="575.0" width="7.856" height="39.3" fill="#6cc5ea"/><rect x="837.47" y="614.3" width="7.856" height="193.5" fill="#3f57de"/><rect x="845.93" y="576.0" width="7.856" height="42.1" fill="#6cc5ea"/><rect x="845.93" y="618.1" width="7.856" height="189.7" fill="#3f57de"/><rect x="854.39" y="578.3" width="7.856" height="38.9" fill="#6cc5ea"/><rect x="854.39" y="617.2" width="7.856" height="190.6" fill="#3f57de"/><rect x="862.84" y="578.3" width="7.856" height="38.9" fill="#6cc5ea"/><rect x="862.84" y="617.2" width="7.856" height="190.6" fill="#3f57de"/><rect x="871.30" y="578.3" width="7.856" height="38.9" fill="#6cc5ea"/><rect x="871.30" y="617.2" width="7.856" height="190.6" fill="#3f57de"/><rect x="879.75" y="611.0" width="7.856" height="34.2" fill="#6cc5ea"/><rect x="879.75" y="645.2" width="7.856" height="162.6" fill="#3f57de"/><rect x="888.21" y="582.7" width="7.856" height="42.1" fill="#6cc5ea"/><rect x="888.21" y="624.8" width="7.856" height="183.0" fill="#3f57de"/><rect x="896.67" y="576.0" width="7.856" height="42.1" fill="#6cc5ea"/><rect x="896.67" y="618.1" width="7.856" height="189.7" fill="#3f57de"/><rect x="905.12" y="575.0" width="7.856" height="42.7" fill="#6cc5ea"/><rect x="905.12" y="617.7" width="7.856" height="190.1" fill="#3f57de"/><rect x="913.58" y="576.5" width="7.856" height="38.5" fill="#6cc5ea"/><rect x="913.58" y="615.0" width="7.856" height="192.8" fill="#3f57de"/><rect x="922.03" y="580.2" width="7.856" height="39.0" fill="#6cc5ea"/><rect x="922.03" y="619.2" width="7.856" height="188.6" fill="#3f57de"/><rect x="930.49" y="558.2" width="7.856" height="50.8" fill="#6cc5ea"/><rect x="930.49" y="609.0" width="7.856" height="198.8" fill="#3f57de"/><rect x="938.95" y="561.2" width="7.856" height="47.8" fill="#6cc5ea"/><rect x="938.95" y="609.0" width="7.856" height="198.8" fill="#3f57de"/><rect x="947.40" y="561.2" width="7.856" height="47.8" fill="#6cc5ea"/><rect x="947.40" y="609.0" width="7.856" height="198.8" fill="#3f57de"/><rect x="955.86" y="562.2" width="7.856" height="47.7" fill="#6cc5ea"/><rect x="955.86" y="609.9" width="7.856" height="197.9" fill="#3f57de"/><rect x="964.31" y="568.1" width="7.856" height="46.9" fill="#6cc5ea"/><rect x="964.31" y="615.0" width="7.856" height="192.8" fill="#3f57de"/><rect x="972.77" y="610.2" width="7.856" height="42.7" fill="#6cc5ea"/><rect x="972.77" y="652.9" width="7.856" height="154.9" fill="#3f57de"/><rect x="981.23" y="583.9" width="7.856" height="49.1" fill="#6cc5ea"/><rect x="981.23" y="633.0" width="7.856" height="174.8" fill="#3f57de"/><rect x="989.68" y="583.9" width="7.856" height="49.1" fill="#6cc5ea"/><rect x="989.68" y="633.0" width="7.856" height="174.8" fill="#3f57de"/><rect x="998.14" y="589.9" width="7.856" height="49.0" fill="#6cc5ea"/><rect x="998.14" y="638.9" width="7.856" height="168.9" fill="#3f57de"/><rect x="1006.59" y="594.2" width="7.856" height="49.1" fill="#6cc5ea"/><rect x="1006.59" y="643.3" width="7.856" height="164.5" fill="#3f57de"/><rect x="1015.05" y="636.2" width="7.856" height="44.6" fill="#6cc5ea"/><rect x="1015.05" y="680.8" width="7.856" height="127.0" fill="#3f57de"/><rect x="1023.51" y="603.0" width="7.856" height="44.6" fill="#6cc5ea"/><rect x="1023.51" y="647.6" width="7.856" height="160.2" fill="#3f57de"/><rect x="1031.96" y="605.0" width="7.856" height="44.1" fill="#6cc5ea"/><rect x="1031.96" y="649.1" width="7.856" height="158.7" fill="#3f57de"/><rect x="1040.42" y="605.0" width="7.856" height="44.1" fill="#6cc5ea"/><rect x="1040.42" y="649.1" width="7.856" height="158.7" fill="#3f57de"/><rect x="1048.87" y="608.2" width="7.856" height="44.7" fill="#6cc5ea"/><rect x="1048.87" y="652.9" width="7.856" height="154.9" fill="#3f57de"/><rect x="1057.33" y="602.3" width="7.856" height="48.8" fill="#6cc5ea"/><rect x="1057.33" y="651.1" width="7.856" height="156.7" fill="#3f57de"/><rect x="1065.79" y="602.3" width="7.856" height="48.8" fill="#6cc5ea"/><rect x="1065.79" y="651.1" width="7.856" height="156.7" fill="#3f57de"/><rect x="1074.24" y="604.2" width="7.856" height="48.1" fill="#6cc5ea"/><rect x="1074.24" y="652.3" width="7.856" height="155.5" fill="#3f57de"/><rect x="1082.70" y="604.2" width="7.856" height="48.1" fill="#6cc5ea"/><rect x="1082.70" y="652.3" width="7.856" height="155.5" fill="#3f57de"/><rect x="1091.15" y="612.1" width="7.856" height="45.7" fill="#6cc5ea"/><rect x="1091.15" y="657.8" width="7.856" height="150.0" fill="#3f57de"/><rect x="1099.61" y="607.9" width="7.856" height="46.1" fill="#6cc5ea"/><rect x="1099.61" y="654.0" width="7.856" height="153.8" fill="#3f57de"/><rect x="1108.07" y="607.9" width="7.856" height="46.1" fill="#6cc5ea"/><rect x="1108.07" y="654.0" width="7.856" height="153.8" fill="#3f57de"/><rect x="1116.52" y="607.9" width="7.856" height="46.1" fill="#6cc5ea"/><rect x="1116.52" y="654.0" width="7.856" height="153.8" fill="#3f57de"/><rect x="1124.98" y="607.9" width="7.856" height="46.1" fill="#6cc5ea"/><rect x="1124.98" y="654.0" width="7.856" height="153.8" fill="#3f57de"/><rect x="1133.43" y="611.2" width="7.856" height="46.1" fill="#6cc5ea"/><rect x="1133.43" y="657.3" width="7.856" height="150.5" fill="#3f57de"/><rect x="1141.89" y="607.9" width="7.856" height="46.1" fill="#6cc5ea"/><rect x="1141.89" y="654.0" width="7.856" height="153.8" fill="#3f57de"/><rect x="1150.35" y="609.0" width="7.856" height="42.8" fill="#6cc5ea"/><rect x="1150.35" y="651.8" width="7.856" height="156.0" fill="#3f57de"/><rect x="1158.80" y="609.0" width="7.856" height="42.8" fill="#6cc5ea"/><rect x="1158.80" y="651.8" width="7.856" height="156.0" fill="#3f57de"/><rect x="1167.26" y="612.1" width="7.856" height="43.0" fill="#6cc5ea"/><rect x="1167.26" y="655.1" width="7.856" height="152.7" fill="#3f57de"/><rect x="1175.71" y="648.1" width="7.856" height="36.7" fill="#6cc5ea"/><rect x="1175.71" y="684.8" width="7.856" height="123.0" fill="#3f57de"/><rect x="1184.17" y="634.3" width="7.856" height="36.8" fill="#6cc5ea"/><rect x="1184.17" y="671.1" width="7.856" height="136.7" fill="#3f57de"/><rect x="1192.63" y="638.0" width="7.856" height="33.1" fill="#6cc5ea"/><rect x="1192.63" y="671.1" width="7.856" height="136.7" fill="#3f57de"/><rect x="1201.08" y="638.0" width="7.856" height="33.1" fill="#6cc5ea"/><rect x="1201.08" y="671.1" width="7.856" height="136.7" fill="#3f57de"/><rect x="1209.54" y="643.2" width="7.856" height="32.9" fill="#6cc5ea"/><rect x="1209.54" y="676.1" width="7.856" height="131.7" fill="#3f57de"/><rect x="1217.99" y="655.1" width="7.856" height="33.2" fill="#6cc5ea"/><rect x="1217.99" y="688.3" width="7.856" height="119.5" fill="#3f57de"/><rect x="1226.45" y="663.1" width="7.856" height="33.0" fill="#6cc5ea"/><rect x="1226.45" y="696.1" width="7.856" height="111.7" fill="#3f57de"/><rect x="1234.91" y="663.1" width="7.856" height="33.0" fill="#6cc5ea"/><rect x="1234.91" y="696.1" width="7.856" height="111.7" fill="#3f57de"/><rect x="1243.36" y="687.0" width="7.856" height="29.8" fill="#6cc5ea"/><rect x="1243.36" y="716.8" width="7.856" height="91.0" fill="#3f57de"/><rect x="1251.82" y="673.2" width="7.856" height="32.9" fill="#6cc5ea"/><rect x="1251.82" y="706.1" width="7.856" height="101.7" fill="#3f57de"/><rect x="1260.27" y="695.6" width="7.856" height="30.4" fill="#6cc5ea"/><rect x="1260.27" y="726.0" width="7.856" height="81.8" fill="#3f57de"/><rect x="1268.73" y="693.1" width="7.856" height="24.9" fill="#6cc5ea"/><rect x="1268.73" y="718.0" width="7.856" height="89.8" fill="#3f57de"/><rect x="1277.19" y="689.9" width="7.856" height="24.3" fill="#6cc5ea"/><rect x="1277.19" y="714.2" width="7.856" height="93.6" fill="#3f57de"/><rect x="1285.64" y="689.9" width="7.856" height="24.3" fill="#6cc5ea"/><rect x="1285.64" y="714.2" width="7.856" height="93.6" fill="#3f57de"/><rect x="1294.10" y="689.9" width="7.856" height="24.3" fill="#6cc5ea"/><rect x="1294.10" y="714.2" width="7.856" height="93.6" fill="#3f57de"/><rect x="1302.55" y="693.1" width="7.856" height="21.1" fill="#6cc5ea"/><rect x="1302.55" y="714.2" width="7.856" height="93.6" fill="#3f57de"/><rect x="1311.01" y="704.9" width="7.856" height="21.1" fill="#6cc5ea"/><rect x="1311.01" y="726.0" width="7.856" height="81.8" fill="#3f57de"/><rect x="1319.47" y="703.1" width="7.856" height="21.1" fill="#6cc5ea"/><rect x="1319.47" y="724.2" width="7.856" height="83.6" fill="#3f57de"/><rect x="1327.92" y="703.1" width="7.856" height="21.1" fill="#6cc5ea"/><rect x="1327.92" y="724.2" width="7.856" height="83.6" fill="#3f57de"/><rect x="1336.38" y="703.1" width="7.856" height="21.1" fill="#6cc5ea"/><rect x="1336.38" y="724.2" width="7.856" height="83.6" fill="#3f57de"/><rect x="1344.83" y="706.3" width="7.856" height="17.9" fill="#6cc5ea"/><rect x="1344.83" y="724.2" width="7.856" height="83.6" fill="#3f57de"/><rect x="1353.29" y="728.3" width="7.856" height="12.6" fill="#6cc5ea"/><rect x="1353.29" y="740.9" width="7.856" height="66.9" fill="#3f57de"/><rect x="1361.75" y="731.7" width="7.856" height="13.0" fill="#6cc5ea"/><rect x="1361.75" y="744.7" width="7.856" height="63.1" fill="#3f57de"/><rect x="1370.20" y="731.7" width="7.856" height="13.0" fill="#6cc5ea"/><rect x="1370.20" y="744.7" width="7.856" height="63.1" fill="#3f57de"/><rect x="1378.66" y="731.7" width="7.856" height="13.0" fill="#6cc5ea"/><rect x="1378.66" y="744.7" width="7.856" height="63.1" fill="#3f57de"/><rect x="1387.11" y="731.7" width="7.856" height="13.0" fill="#6cc5ea"/><rect x="1387.11" y="744.7" width="7.856" height="63.1" fill="#3f57de"/><rect x="1395.57" y="753.8" width="7.856" height="5.6" fill="#6cc5ea"/><rect x="1395.57" y="759.4" width="7.856" height="48.4" fill="#3f57de"/><rect x="1404.03" y="753.8" width="7.856" height="5.6" fill="#6cc5ea"/><rect x="1404.03" y="759.4" width="7.856" height="48.4" fill="#3f57de"/><rect x="1412.48" y="753.8" width="7.856" height="5.6" fill="#6cc5ea"/><rect x="1412.48" y="759.4" width="7.856" height="48.4" fill="#3f57de"/><rect x="1420.94" y="759.4" width="7.856" height="5.6" fill="#6cc5ea"/><rect x="1420.94" y="765.0" width="7.856" height="42.8" fill="#3f57de"/><rect x="1429.39" y="762.8" width="7.856" height="5.6" fill="#6cc5ea"/><rect x="1429.39" y="768.4" width="7.856" height="39.4" fill="#3f57de"/><rect x="1437.85" y="773.4" width="7.856" height="5.7" fill="#6cc5ea"/><rect x="1437.85" y="779.1" width="7.856" height="28.7" fill="#3f57de"/><rect x="1446.31" y="773.4" width="7.856" height="5.7" fill="#6cc5ea"/><rect x="1446.31" y="779.1" width="7.856" height="28.7" fill="#3f57de"/><rect x="1454.76" y="773.4" width="7.856" height="5.7" fill="#6cc5ea"/><rect x="1454.76" y="779.1" width="7.856" height="28.7" fill="#3f57de"/><rect x="1463.22" y="773.4" width="7.856" height="5.7" fill="#6cc5ea"/><rect x="1463.22" y="779.1" width="7.856" height="28.7" fill="#3f57de"/><rect x="1471.67" y="776.5" width="7.856" height="5.7" fill="#6cc5ea"/><rect x="1471.67" y="782.2" width="7.856" height="25.6" fill="#3f57de"/><path d="M385.20 628.00C387.96 628.00 390.72 628.00 393.48 628.00C396.30 628.00 399.12 628.00 401.94 628.00C404.76 628.00 407.58 628.00 410.40 628.00C413.21 628.00 416.03 628.35 418.85 629.00C421.67 629.65 424.49 684.50 427.31 684.50C430.13 684.50 432.95 631.30 435.76 631.30C438.58 631.30 441.40 631.30 444.22 631.30C447.04 631.30 449.86 631.30 452.68 631.30C455.49 631.30 458.31 634.70 461.13 634.70C463.95 634.70 466.77 631.30 469.59 631.30C472.41 631.30 475.23 631.30 478.04 631.30C480.86 631.30 483.68 631.30 486.50 631.30C489.32 631.30 492.14 631.30 494.96 631.30C497.77 631.30 500.59 634.30 503.41 634.30C506.23 634.30 509.05 631.00 511.87 631.00C514.69 631.00 517.51 631.00 520.32 631.00C523.14 631.00 525.96 631.00 528.78 631.00C531.60 631.00 534.42 631.00 537.24 631.00C540.05 631.00 542.87 634.70 545.69 634.70C548.51 634.70 551.33 631.00 554.15 631.00C556.97 631.00 559.79 631.00 562.60 631.00C565.42 631.00 568.24 631.00 571.06 631.00C573.88 631.00 576.70 631.00 579.52 631.00C582.33 631.00 585.15 631.38 587.97 632.00C590.79 632.62 593.61 644.50 596.43 644.50C599.25 644.50 602.07 624.40 604.88 624.40C607.70 624.40 610.52 624.40 613.34 624.40C616.16 624.40 618.98 624.40 621.80 624.40C624.61 624.40 627.43 627.30 630.25 627.30C633.07 627.30 635.89 624.40 638.71 624.40C641.53 624.40 644.35 624.40 647.16 624.40C649.98 624.40 652.80 624.40 655.62 624.40C658.44 624.40 661.26 624.40 664.08 624.40C666.89 624.40 669.71 627.00 672.53 627.00C675.35 627.00 678.17 624.40 680.99 624.40C683.81 624.40 686.63 624.40 689.44 624.40C692.26 624.40 695.08 621.40 697.90 621.40C700.72 621.40 703.54 628.52 706.36 635.00C709.17 641.48 711.99 669.00 714.81 669.00C717.63 669.00 720.45 621.80 723.27 621.80C726.09 621.80 728.91 621.80 731.72 621.80C734.54 621.80 737.36 621.80 740.18 621.80C743.00 621.80 745.82 621.80 748.64 621.80C751.45 621.80 754.27 621.80 757.09 621.80C759.91 621.80 762.73 621.80 765.55 621.80C768.37 621.80 771.19 621.80 774.00 621.80C776.82 621.80 779.64 621.80 782.46 621.80C785.28 621.80 788.10 621.80 790.92 621.80C793.73 621.80 796.55 621.80 799.37 621.80C802.19 621.80 805.01 621.80 807.83 621.80C810.65 621.80 813.47 621.80 816.28 621.80C819.10 621.80 821.92 621.80 824.74 621.80C827.56 621.80 830.38 621.80 833.20 621.80C836.01 621.80 838.83 621.80 841.65 621.80C844.47 621.80 847.29 621.80 850.11 621.80C852.93 621.80 855.75 621.80 858.56 621.80C861.38 621.80 864.20 621.80 867.02 621.80C869.84 621.80 872.66 621.80 875.48 621.80C878.29 621.80 881.11 641.00 883.93 641.00C886.75 641.00 889.57 626.96 892.39 624.00C895.21 621.04 898.03 618.19 900.84 618.00C903.66 617.81 906.48 617.70 909.30 617.70C912.12 617.70 914.94 617.70 917.76 617.70C920.57 617.70 923.39 620.70 926.21 620.70C929.03 620.70 931.85 618.10 934.67 618.10C937.49 618.10 940.31 618.10 943.12 618.10C945.94 618.10 948.76 618.10 951.58 618.10C954.40 618.10 957.22 618.10 960.04 618.10C962.85 618.10 965.67 619.31 968.49 621.00C971.31 622.69 974.13 641.00 976.95 641.00C979.77 641.00 982.59 618.10 985.40 618.10C988.22 618.10 991.04 618.10 993.86 618.10C996.68 618.10 999.50 618.10 1002.32 618.10C1005.13 618.10 1007.95 619.68 1010.77 622.00C1013.59 624.32 1016.41 654.80 1019.23 654.80C1022.05 654.80 1024.87 618.10 1027.68 617.90C1030.50 617.70 1033.32 617.60 1036.14 617.60C1038.96 617.60 1041.78 617.60 1044.60 617.60C1047.41 617.60 1050.23 621.30 1053.05 621.30C1055.87 621.30 1058.69 618.30 1061.51 618.30C1064.33 618.30 1067.15 621.30 1069.96 621.30C1072.78 621.30 1075.60 621.30 1078.42 621.30C1081.24 621.30 1084.06 621.30 1086.88 621.30C1089.69 621.30 1092.51 624.60 1095.33 624.60C1098.15 624.60 1100.97 621.30 1103.79 621.30C1106.61 621.30 1109.43 621.30 1112.24 621.30C1115.06 621.30 1117.88 621.30 1120.70 621.30C1123.52 621.30 1126.34 621.30 1129.16 621.30C1131.97 621.30 1134.79 624.60 1137.61 624.60C1140.43 624.60 1143.25 624.60 1146.07 624.60C1148.89 624.60 1151.71 624.60 1154.52 624.60C1157.34 624.60 1160.16 624.60 1162.98 624.60C1165.80 624.60 1168.62 624.60 1171.44 624.60C1174.25 624.60 1177.07 657.80 1179.89 657.80C1182.71 657.80 1185.53 631.30 1188.35 631.30C1191.17 631.30 1193.99 631.30 1196.80 631.30C1199.62 631.30 1202.44 631.30 1205.26 631.30C1208.08 631.30 1210.90 631.30 1213.72 631.30C1216.53 631.30 1219.35 634.70 1222.17 634.70C1224.99 634.70 1227.81 634.60 1230.63 634.60C1233.45 634.60 1236.27 634.60 1239.08 634.60C1241.90 634.60 1244.72 661.50 1247.54 661.50C1250.36 661.50 1253.18 638.50 1256.00 638.50C1258.81 638.50 1261.63 667.60 1264.45 667.60C1267.27 667.60 1270.09 638.10 1272.91 638.10C1275.73 638.10 1278.55 638.10 1281.36 638.10C1284.18 638.10 1287.00 638.10 1289.82 638.10C1292.64 638.10 1295.46 638.10 1298.28 638.10C1301.09 638.10 1303.91 638.10 1306.73 638.10C1309.55 638.10 1312.37 638.10 1315.19 638.10C1318.01 638.10 1320.83 638.10 1323.64 638.10C1326.46 638.10 1329.28 638.10 1332.10 638.10C1334.92 638.10 1337.74 638.10 1340.56 638.10C1343.37 638.10 1346.19 638.10 1349.01 638.10C1351.83 638.10 1354.65 638.10 1357.47 638.10C1360.29 638.10 1363.11 638.10 1365.92 638.10C1368.74 638.10 1371.56 638.10 1374.38 638.10C1377.20 638.10 1380.02 638.10 1382.84 638.10C1385.65 638.10 1388.47 638.06 1391.29 638.00C1394.11 637.94 1396.93 634.60 1399.75 634.60C1402.57 634.60 1405.39 634.60 1408.20 634.60C1411.02 634.60 1413.84 634.60 1416.66 634.60C1419.48 634.60 1422.30 634.60 1425.12 634.60C1427.93 634.60 1430.75 634.60 1433.57 634.60C1436.39 634.60 1439.21 634.52 1442.03 634.40C1444.85 634.27 1447.67 631.46 1450.48 631.40C1453.30 631.34 1456.12 631.36 1458.94 631.30C1461.76 631.24 1464.58 628.10 1467.40 628.10C1470.20 628.10 1473.00 628.10 1475.80 628.10 L1475.80 807.8 L385.20 807.8 Z" fill="#ae60e6" fill-opacity="0.27"/><path d="M385.20 628.00C387.96 628.00 390.72 628.00 393.48 628.00C396.30 628.00 399.12 628.00 401.94 628.00C404.76 628.00 407.58 628.00 410.40 628.00C413.21 628.00 416.03 628.35 418.85 629.00C421.67 629.65 424.49 684.50 427.31 684.50C430.13 684.50 432.95 631.30 435.76 631.30C438.58 631.30 441.40 631.30 444.22 631.30C447.04 631.30 449.86 631.30 452.68 631.30C455.49 631.30 458.31 634.70 461.13 634.70C463.95 634.70 466.77 631.30 469.59 631.30C472.41 631.30 475.23 631.30 478.04 631.30C480.86 631.30 483.68 631.30 486.50 631.30C489.32 631.30 492.14 631.30 494.96 631.30C497.77 631.30 500.59 634.30 503.41 634.30C506.23 634.30 509.05 631.00 511.87 631.00C514.69 631.00 517.51 631.00 520.32 631.00C523.14 631.00 525.96 631.00 528.78 631.00C531.60 631.00 534.42 631.00 537.24 631.00C540.05 631.00 542.87 634.70 545.69 634.70C548.51 634.70 551.33 631.00 554.15 631.00C556.97 631.00 559.79 631.00 562.60 631.00C565.42 631.00 568.24 631.00 571.06 631.00C573.88 631.00 576.70 631.00 579.52 631.00C582.33 631.00 585.15 631.38 587.97 632.00C590.79 632.62 593.61 644.50 596.43 644.50C599.25 644.50 602.07 624.40 604.88 624.40C607.70 624.40 610.52 624.40 613.34 624.40C616.16 624.40 618.98 624.40 621.80 624.40C624.61 624.40 627.43 627.30 630.25 627.30C633.07 627.30 635.89 624.40 638.71 624.40C641.53 624.40 644.35 624.40 647.16 624.40C649.98 624.40 652.80 624.40 655.62 624.40C658.44 624.40 661.26 624.40 664.08 624.40C666.89 624.40 669.71 627.00 672.53 627.00C675.35 627.00 678.17 624.40 680.99 624.40C683.81 624.40 686.63 624.40 689.44 624.40C692.26 624.40 695.08 621.40 697.90 621.40C700.72 621.40 703.54 628.52 706.36 635.00C709.17 641.48 711.99 669.00 714.81 669.00C717.63 669.00 720.45 621.80 723.27 621.80C726.09 621.80 728.91 621.80 731.72 621.80C734.54 621.80 737.36 621.80 740.18 621.80C743.00 621.80 745.82 621.80 748.64 621.80C751.45 621.80 754.27 621.80 757.09 621.80C759.91 621.80 762.73 621.80 765.55 621.80C768.37 621.80 771.19 621.80 774.00 621.80C776.82 621.80 779.64 621.80 782.46 621.80C785.28 621.80 788.10 621.80 790.92 621.80C793.73 621.80 796.55 621.80 799.37 621.80C802.19 621.80 805.01 621.80 807.83 621.80C810.65 621.80 813.47 621.80 816.28 621.80C819.10 621.80 821.92 621.80 824.74 621.80C827.56 621.80 830.38 621.80 833.20 621.80C836.01 621.80 838.83 621.80 841.65 621.80C844.47 621.80 847.29 621.80 850.11 621.80C852.93 621.80 855.75 621.80 858.56 621.80C861.38 621.80 864.20 621.80 867.02 621.80C869.84 621.80 872.66 621.80 875.48 621.80C878.29 621.80 881.11 641.00 883.93 641.00C886.75 641.00 889.57 626.96 892.39 624.00C895.21 621.04 898.03 618.19 900.84 618.00C903.66 617.81 906.48 617.70 909.30 617.70C912.12 617.70 914.94 617.70 917.76 617.70C920.57 617.70 923.39 620.70 926.21 620.70C929.03 620.70 931.85 618.10 934.67 618.10C937.49 618.10 940.31 618.10 943.12 618.10C945.94 618.10 948.76 618.10 951.58 618.10C954.40 618.10 957.22 618.10 960.04 618.10C962.85 618.10 965.67 619.31 968.49 621.00C971.31 622.69 974.13 641.00 976.95 641.00C979.77 641.00 982.59 618.10 985.40 618.10C988.22 618.10 991.04 618.10 993.86 618.10C996.68 618.10 999.50 618.10 1002.32 618.10C1005.13 618.10 1007.95 619.68 1010.77 622.00C1013.59 624.32 1016.41 654.80 1019.23 654.80C1022.05 654.80 1024.87 618.10 1027.68 617.90C1030.50 617.70 1033.32 617.60 1036.14 617.60C1038.96 617.60 1041.78 617.60 1044.60 617.60C1047.41 617.60 1050.23 621.30 1053.05 621.30C1055.87 621.30 1058.69 618.30 1061.51 618.30C1064.33 618.30 1067.15 621.30 1069.96 621.30C1072.78 621.30 1075.60 621.30 1078.42 621.30C1081.24 621.30 1084.06 621.30 1086.88 621.30C1089.69 621.30 1092.51 624.60 1095.33 624.60C1098.15 624.60 1100.97 621.30 1103.79 621.30C1106.61 621.30 1109.43 621.30 1112.24 621.30C1115.06 621.30 1117.88 621.30 1120.70 621.30C1123.52 621.30 1126.34 621.30 1129.16 621.30C1131.97 621.30 1134.79 624.60 1137.61 624.60C1140.43 624.60 1143.25 624.60 1146.07 624.60C1148.89 624.60 1151.71 624.60 1154.52 624.60C1157.34 624.60 1160.16 624.60 1162.98 624.60C1165.80 624.60 1168.62 624.60 1171.44 624.60C1174.25 624.60 1177.07 657.80 1179.89 657.80C1182.71 657.80 1185.53 631.30 1188.35 631.30C1191.17 631.30 1193.99 631.30 1196.80 631.30C1199.62 631.30 1202.44 631.30 1205.26 631.30C1208.08 631.30 1210.90 631.30 1213.72 631.30C1216.53 631.30 1219.35 634.70 1222.17 634.70C1224.99 634.70 1227.81 634.60 1230.63 634.60C1233.45 634.60 1236.27 634.60 1239.08 634.60C1241.90 634.60 1244.72 661.50 1247.54 661.50C1250.36 661.50 1253.18 638.50 1256.00 638.50C1258.81 638.50 1261.63 667.60 1264.45 667.60C1267.27 667.60 1270.09 638.10 1272.91 638.10C1275.73 638.10 1278.55 638.10 1281.36 638.10C1284.18 638.10 1287.00 638.10 1289.82 638.10C1292.64 638.10 1295.46 638.10 1298.28 638.10C1301.09 638.10 1303.91 638.10 1306.73 638.10C1309.55 638.10 1312.37 638.10 1315.19 638.10C1318.01 638.10 1320.83 638.10 1323.64 638.10C1326.46 638.10 1329.28 638.10 1332.10 638.10C1334.92 638.10 1337.74 638.10 1340.56 638.10C1343.37 638.10 1346.19 638.10 1349.01 638.10C1351.83 638.10 1354.65 638.10 1357.47 638.10C1360.29 638.10 1363.11 638.10 1365.92 638.10C1368.74 638.10 1371.56 638.10 1374.38 638.10C1377.20 638.10 1380.02 638.10 1382.84 638.10C1385.65 638.10 1388.47 638.06 1391.29 638.00C1394.11 637.94 1396.93 634.60 1399.75 634.60C1402.57 634.60 1405.39 634.60 1408.20 634.60C1411.02 634.60 1413.84 634.60 1416.66 634.60C1419.48 634.60 1422.30 634.60 1425.12 634.60C1427.93 634.60 1430.75 634.60 1433.57 634.60C1436.39 634.60 1439.21 634.52 1442.03 634.40C1444.85 634.27 1447.67 631.46 1450.48 631.40C1453.30 631.34 1456.12 631.36 1458.94 631.30C1461.76 631.24 1464.58 628.10 1467.40 628.10C1470.20 628.10 1473.00 628.10 1475.80 628.10" fill="none" stroke="#ffb8ff" stroke-opacity="0.5" stroke-width="2.6"/><path d="M385.20 628.00C387.96 628.00 390.72 628.00 393.48 628.00C396.30 628.00 399.12 628.00 401.94 628.00C404.76 628.00 407.58 628.00 410.40 628.00C413.21 628.00 416.03 628.35 418.85 629.00C421.67 629.65 424.49 684.50 427.31 684.50C430.13 684.50 432.95 631.30 435.76 631.30C438.58 631.30 441.40 631.30 444.22 631.30C447.04 631.30 449.86 631.30 452.68 631.30C455.49 631.30 458.31 634.70 461.13 634.70C463.95 634.70 466.77 631.30 469.59 631.30C472.41 631.30 475.23 631.30 478.04 631.30C480.86 631.30 483.68 631.30 486.50 631.30C489.32 631.30 492.14 631.30 494.96 631.30C497.77 631.30 500.59 634.30 503.41 634.30C506.23 634.30 509.05 631.00 511.87 631.00C514.69 631.00 517.51 631.00 520.32 631.00C523.14 631.00 525.96 631.00 528.78 631.00C531.60 631.00 534.42 631.00 537.24 631.00C540.05 631.00 542.87 634.70 545.69 634.70C548.51 634.70 551.33 631.00 554.15 631.00C556.97 631.00 559.79 631.00 562.60 631.00C565.42 631.00 568.24 631.00 571.06 631.00C573.88 631.00 576.70 631.00 579.52 631.00C582.33 631.00 585.15 631.38 587.97 632.00C590.79 632.62 593.61 644.50 596.43 644.50C599.25 644.50 602.07 624.40 604.88 624.40C607.70 624.40 610.52 624.40 613.34 624.40C616.16 624.40 618.98 624.40 621.80 624.40C624.61 624.40 627.43 627.30 630.25 627.30C633.07 627.30 635.89 624.40 638.71 624.40C641.53 624.40 644.35 624.40 647.16 624.40C649.98 624.40 652.80 624.40 655.62 624.40C658.44 624.40 661.26 624.40 664.08 624.40C666.89 624.40 669.71 627.00 672.53 627.00C675.35 627.00 678.17 624.40 680.99 624.40C683.81 624.40 686.63 624.40 689.44 624.40C692.26 624.40 695.08 621.40 697.90 621.40C700.72 621.40 703.54 628.52 706.36 635.00C709.17 641.48 711.99 669.00 714.81 669.00C717.63 669.00 720.45 621.80 723.27 621.80C726.09 621.80 728.91 621.80 731.72 621.80C734.54 621.80 737.36 621.80 740.18 621.80C743.00 621.80 745.82 621.80 748.64 621.80C751.45 621.80 754.27 621.80 757.09 621.80C759.91 621.80 762.73 621.80 765.55 621.80C768.37 621.80 771.19 621.80 774.00 621.80C776.82 621.80 779.64 621.80 782.46 621.80C785.28 621.80 788.10 621.80 790.92 621.80C793.73 621.80 796.55 621.80 799.37 621.80C802.19 621.80 805.01 621.80 807.83 621.80C810.65 621.80 813.47 621.80 816.28 621.80C819.10 621.80 821.92 621.80 824.74 621.80C827.56 621.80 830.38 621.80 833.20 621.80C836.01 621.80 838.83 621.80 841.65 621.80C844.47 621.80 847.29 621.80 850.11 621.80C852.93 621.80 855.75 621.80 858.56 621.80C861.38 621.80 864.20 621.80 867.02 621.80C869.84 621.80 872.66 621.80 875.48 621.80C878.29 621.80 881.11 641.00 883.93 641.00C886.75 641.00 889.57 626.96 892.39 624.00C895.21 621.04 898.03 618.19 900.84 618.00C903.66 617.81 906.48 617.70 909.30 617.70C912.12 617.70 914.94 617.70 917.76 617.70C920.57 617.70 923.39 620.70 926.21 620.70C929.03 620.70 931.85 618.10 934.67 618.10C937.49 618.10 940.31 618.10 943.12 618.10C945.94 618.10 948.76 618.10 951.58 618.10C954.40 618.10 957.22 618.10 960.04 618.10C962.85 618.10 965.67 619.31 968.49 621.00C971.31 622.69 974.13 641.00 976.95 641.00C979.77 641.00 982.59 618.10 985.40 618.10C988.22 618.10 991.04 618.10 993.86 618.10C996.68 618.10 999.50 618.10 1002.32 618.10C1005.13 618.10 1007.95 619.68 1010.77 622.00C1013.59 624.32 1016.41 654.80 1019.23 654.80C1022.05 654.80 1024.87 618.10 1027.68 617.90C1030.50 617.70 1033.32 617.60 1036.14 617.60C1038.96 617.60 1041.78 617.60 1044.60 617.60C1047.41 617.60 1050.23 621.30 1053.05 621.30C1055.87 621.30 1058.69 618.30 1061.51 618.30C1064.33 618.30 1067.15 621.30 1069.96 621.30C1072.78 621.30 1075.60 621.30 1078.42 621.30C1081.24 621.30 1084.06 621.30 1086.88 621.30C1089.69 621.30 1092.51 624.60 1095.33 624.60C1098.15 624.60 1100.97 621.30 1103.79 621.30C1106.61 621.30 1109.43 621.30 1112.24 621.30C1115.06 621.30 1117.88 621.30 1120.70 621.30C1123.52 621.30 1126.34 621.30 1129.16 621.30C1131.97 621.30 1134.79 624.60 1137.61 624.60C1140.43 624.60 1143.25 624.60 1146.07 624.60C1148.89 624.60 1151.71 624.60 1154.52 624.60C1157.34 624.60 1160.16 624.60 1162.98 624.60C1165.80 624.60 1168.62 624.60 1171.44 624.60C1174.25 624.60 1177.07 657.80 1179.89 657.80C1182.71 657.80 1185.53 631.30 1188.35 631.30C1191.17 631.30 1193.99 631.30 1196.80 631.30C1199.62 631.30 1202.44 631.30 1205.26 631.30C1208.08 631.30 1210.90 631.30 1213.72 631.30C1216.53 631.30 1219.35 634.70 1222.17 634.70C1224.99 634.70 1227.81 634.60 1230.63 634.60C1233.45 634.60 1236.27 634.60 1239.08 634.60C1241.90 634.60 1244.72 661.50 1247.54 661.50C1250.36 661.50 1253.18 638.50 1256.00 638.50C1258.81 638.50 1261.63 667.60 1264.45 667.60C1267.27 667.60 1270.09 638.10 1272.91 638.10C1275.73 638.10 1278.55 638.10 1281.36 638.10C1284.18 638.10 1287.00 638.10 1289.82 638.10C1292.64 638.10 1295.46 638.10 1298.28 638.10C1301.09 638.10 1303.91 638.10 1306.73 638.10C1309.55 638.10 1312.37 638.10 1315.19 638.10C1318.01 638.10 1320.83 638.10 1323.64 638.10C1326.46 638.10 1329.28 638.10 1332.10 638.10C1334.92 638.10 1337.74 638.10 1340.56 638.10C1343.37 638.10 1346.19 638.10 1349.01 638.10C1351.83 638.10 1354.65 638.10 1357.47 638.10C1360.29 638.10 1363.11 638.10 1365.92 638.10C1368.74 638.10 1371.56 638.10 1374.38 638.10C1377.20 638.10 1380.02 638.10 1382.84 638.10C1385.65 638.10 1388.47 638.06 1391.29 638.00C1394.11 637.94 1396.93 634.60 1399.75 634.60C1402.57 634.60 1405.39 634.60 1408.20 634.60C1411.02 634.60 1413.84 634.60 1416.66 634.60C1419.48 634.60 1422.30 634.60 1425.12 634.60C1427.93 634.60 1430.75 634.60 1433.57 634.60C1436.39 634.60 1439.21 634.52 1442.03 634.40C1444.85 634.27 1447.67 631.46 1450.48 631.40C1453.30 631.34 1456.12 631.36 1458.94 631.30C1461.76 631.24 1464.58 628.10 1467.40 628.10C1470.20 628.10 1473.00 628.10 1475.80 628.10" fill="none" stroke="#7a1fc4" stroke-width="1.0"/><rect x="381" y="807.8" width="1099" height="2.4" fill="#dde0f8"/></svg>
<div style="position:absolute;left:380px;top:833px;width:1px;height:22px;background:#e0e0e7"></div>
<div class="t" style="left:387.3px;top:833.6px;font-size:12.31px;letter-spacing:0.000px;font-weight:700;color:#353560;">Feb '26</div>
<div style="position:absolute;left:508px;top:833px;width:1px;height:22px;background:#e0e0e7"></div>
<div class="t" style="left:515.2px;top:833.6px;font-size:12.33px;letter-spacing:0.000px;font-weight:400;color:#3e3e62;-webkit-text-stroke:0.25px #3e3e62;">Mar '26</div>
<div style="position:absolute;left:694px;top:833px;width:1px;height:22px;background:#e0e0e7"></div>
<div class="t" style="left:701.4px;top:833.6px;font-size:12.36px;letter-spacing:0.000px;font-weight:400;color:#3e3e62;-webkit-text-stroke:0.25px #3e3e62;">Apr '26</div>
<div style="position:absolute;left:880px;top:833px;width:1px;height:22px;background:#e0e0e7"></div>
<div class="t" style="left:887.3px;top:833.6px;font-size:12.30px;letter-spacing:0.000px;font-weight:400;color:#3e3e62;-webkit-text-stroke:0.25px #3e3e62;">May '26</div>
<div style="position:absolute;left:1058px;top:833px;width:1px;height:22px;background:#e0e0e7"></div>
<div class="t" style="left:1064.8px;top:833.6px;font-size:12.35px;letter-spacing:0.000px;font-weight:400;color:#3e3e62;-webkit-text-stroke:0.25px #3e3e62;">Jun '26</div>
<div style="position:absolute;left:1244px;top:833px;width:1px;height:22px;background:#e0e0e7"></div>
<div class="t" style="left:1250.8px;top:833.6px;font-size:12.41px;letter-spacing:0.000px;font-weight:400;color:#3e3e62;-webkit-text-stroke:0.25px #3e3e62;">Jul '26</div>
<div style="position:absolute;left:1438px;top:833px;width:1px;height:22px;background:#e0e0e7"></div>
<div class="t" style="left:1445.3px;top:833.6px;font-size:12.32px;letter-spacing:0.000px;font-weight:400;color:#3e3e62;-webkit-text-stroke:0.25px #3e3e62;">Aug '26</div>
<div style="position:absolute;left:380.3px;top:811px;width:1.2px;height:21px;background:#f0f0f5"></div>
<div class="t" style="left:383.1px;top:811.8px;font-size:11.35px;letter-spacing:0.000px;font-weight:400;color:#34345a;-webkit-text-stroke:0.2px #34345a;">9</div>
<div style="position:absolute;left:422.58px;top:811px;width:1.2px;height:21px;background:#f0f0f5"></div>
<div class="t" style="left:425.4px;top:811.8px;font-size:11.35px;letter-spacing:-0.000px;font-weight:400;color:#34345a;-webkit-text-stroke:0.2px #34345a;">16</div>
<div style="position:absolute;left:464.86px;top:811px;width:1.2px;height:21px;background:#f0f0f5"></div>
<div class="t" style="left:467.7px;top:811.8px;font-size:11.35px;letter-spacing:-0.000px;font-weight:400;color:#34345a;-webkit-text-stroke:0.2px #34345a;">23</div>
<div style="position:absolute;left:507.14000000000004px;top:811px;width:1.2px;height:21px;background:#f0f0f5"></div>
<div class="t" style="left:509.9px;top:811.8px;font-size:11.35px;letter-spacing:0.000px;font-weight:400;color:#34345a;-webkit-text-stroke:0.2px #34345a;">2</div>
<div style="position:absolute;left:549.42px;top:811px;width:1.2px;height:21px;background:#f0f0f5"></div>
<div class="t" style="left:552.2px;top:811.8px;font-size:11.35px;letter-spacing:0.000px;font-weight:400;color:#34345a;-webkit-text-stroke:0.2px #34345a;">9</div>
<div style="position:absolute;left:591.6999999999999px;top:811px;width:1.2px;height:21px;background:#f0f0f5"></div>
<div class="t" style="left:594.5px;top:811.8px;font-size:11.35px;letter-spacing:0.000px;font-weight:400;color:#34345a;-webkit-text-stroke:0.2px #34345a;">16</div>
<div style="position:absolute;left:633.98px;top:811px;width:1.2px;height:21px;background:#f0f0f5"></div>
<div class="t" style="left:636.8px;top:811.8px;font-size:11.35px;letter-spacing:0.000px;font-weight:400;color:#34345a;-webkit-text-stroke:0.2px #34345a;">23</div>
<div style="position:absolute;left:676.26px;top:811px;width:1.2px;height:21px;background:#f0f0f5"></div>
<div class="t" style="left:679.1px;top:811.8px;font-size:11.35px;letter-spacing:0.000px;font-weight:400;color:#34345a;-webkit-text-stroke:0.2px #34345a;">30</div>
<div style="position:absolute;left:718.54px;top:811px;width:1.2px;height:21px;background:#f0f0f5"></div>
<div class="t" style="left:721.3px;top:811.8px;font-size:11.35px;letter-spacing:0.000px;font-weight:400;color:#34345a;-webkit-text-stroke:0.2px #34345a;">6</div>
<div style="position:absolute;left:760.8199999999999px;top:811px;width:1.2px;height:21px;background:#f0f0f5"></div>
<div class="t" style="left:763.6px;top:811.8px;font-size:11.35px;letter-spacing:0.000px;font-weight:400;color:#34345a;-webkit-text-stroke:0.2px #34345a;">13</div>
<div style="position:absolute;left:803.0999999999999px;top:811px;width:1.2px;height:21px;background:#f0f0f5"></div>
<div class="t" style="left:805.9px;top:811.8px;font-size:11.35px;letter-spacing:0.000px;font-weight:400;color:#34345a;-webkit-text-stroke:0.2px #34345a;">20</div>
<div style="position:absolute;left:845.38px;top:811px;width:1.2px;height:21px;background:#f0f0f5"></div>
<div class="t" style="left:848.2px;top:811.8px;font-size:11.35px;letter-spacing:0.000px;font-weight:400;color:#34345a;-webkit-text-stroke:0.2px #34345a;">27</div>
<div style="position:absolute;left:887.66px;top:811px;width:1.2px;height:21px;background:#f0f0f5"></div>
<div class="t" style="left:890.5px;top:811.8px;font-size:11.35px;letter-spacing:0.000px;font-weight:400;color:#34345a;-webkit-text-stroke:0.2px #34345a;">4</div>
<div style="position:absolute;left:929.9399999999999px;top:811px;width:1.2px;height:21px;background:#f0f0f5"></div>
<div class="t" style="left:932.7px;top:811.8px;font-size:11.35px;letter-spacing:0.000px;font-weight:400;color:#34345a;-webkit-text-stroke:0.2px #34345a;">11</div>
<div style="position:absolute;left:972.22px;top:811px;width:1.2px;height:21px;background:#f0f0f5"></div>
<div class="t" style="left:975.0px;top:811.8px;font-size:11.35px;letter-spacing:0.000px;font-weight:400;color:#34345a;-webkit-text-stroke:0.2px #34345a;">18</div>
<div style="position:absolute;left:1014.5px;top:811px;width:1.2px;height:21px;background:#f0f0f5"></div>
<div class="t" style="left:1017.3px;top:811.8px;font-size:11.35px;letter-spacing:0.000px;font-weight:400;color:#34345a;-webkit-text-stroke:0.2px #34345a;">25</div>
<div style="position:absolute;left:1056.78px;top:811px;width:1.2px;height:21px;background:#f0f0f5"></div>
<div class="t" style="left:1059.6px;top:811.8px;font-size:11.35px;letter-spacing:0.000px;font-weight:400;color:#34345a;-webkit-text-stroke:0.2px #34345a;">1</div>
<div style="position:absolute;left:1099.06px;top:811px;width:1.2px;height:21px;background:#f0f0f5"></div>
<div class="t" style="left:1101.9px;top:811.8px;font-size:11.35px;letter-spacing:0.000px;font-weight:400;color:#34345a;-webkit-text-stroke:0.2px #34345a;">8</div>
<div style="position:absolute;left:1141.34px;top:811px;width:1.2px;height:21px;background:#f0f0f5"></div>
<div class="t" style="left:1144.1px;top:811.8px;font-size:11.35px;letter-spacing:0.000px;font-weight:400;color:#34345a;-webkit-text-stroke:0.2px #34345a;">15</div>
<div style="position:absolute;left:1183.6200000000001px;top:811px;width:1.2px;height:21px;background:#f0f0f5"></div>
<div class="t" style="left:1186.4px;top:811.8px;font-size:11.35px;letter-spacing:0.000px;font-weight:400;color:#34345a;-webkit-text-stroke:0.2px #34345a;">22</div>
<div style="position:absolute;left:1225.8999999999999px;top:811px;width:1.2px;height:21px;background:#f0f0f5"></div>
<div class="t" style="left:1228.7px;top:811.8px;font-size:11.35px;letter-spacing:0.000px;font-weight:400;color:#34345a;-webkit-text-stroke:0.2px #34345a;">29</div>
<div style="position:absolute;left:1268.18px;top:811px;width:1.2px;height:21px;background:#f0f0f5"></div>
<div class="t" style="left:1271.0px;top:811.8px;font-size:11.35px;letter-spacing:0.000px;font-weight:400;color:#34345a;-webkit-text-stroke:0.2px #34345a;">6</div>
<div style="position:absolute;left:1310.46px;top:811px;width:1.2px;height:21px;background:#f0f0f5"></div>
<div class="t" style="left:1313.3px;top:811.8px;font-size:11.35px;letter-spacing:0.000px;font-weight:400;color:#34345a;-webkit-text-stroke:0.2px #34345a;">13</div>
<div style="position:absolute;left:1352.74px;top:811px;width:1.2px;height:21px;background:#f0f0f5"></div>
<div class="t" style="left:1355.5px;top:811.8px;font-size:11.35px;letter-spacing:0.000px;font-weight:400;color:#34345a;-webkit-text-stroke:0.2px #34345a;">20</div>
<div style="position:absolute;left:1395.02px;top:811px;width:1.2px;height:21px;background:#f0f0f5"></div>
<div class="t" style="left:1397.8px;top:811.8px;font-size:11.35px;letter-spacing:0.000px;font-weight:400;color:#34345a;-webkit-text-stroke:0.2px #34345a;">27</div>
<div style="position:absolute;left:1437.3px;top:811px;width:1.2px;height:21px;background:#f0f0f5"></div>
<div class="t" style="left:1440.1px;top:811.8px;font-size:11.35px;letter-spacing:0.000px;font-weight:400;color:#34345a;-webkit-text-stroke:0.2px #34345a;">3</div>
<div style="position:absolute;left:465.16px;top:829.9px;width:845.8000000000002px;height:3px;background:#e88cc4"></div>
</div></body></html>
